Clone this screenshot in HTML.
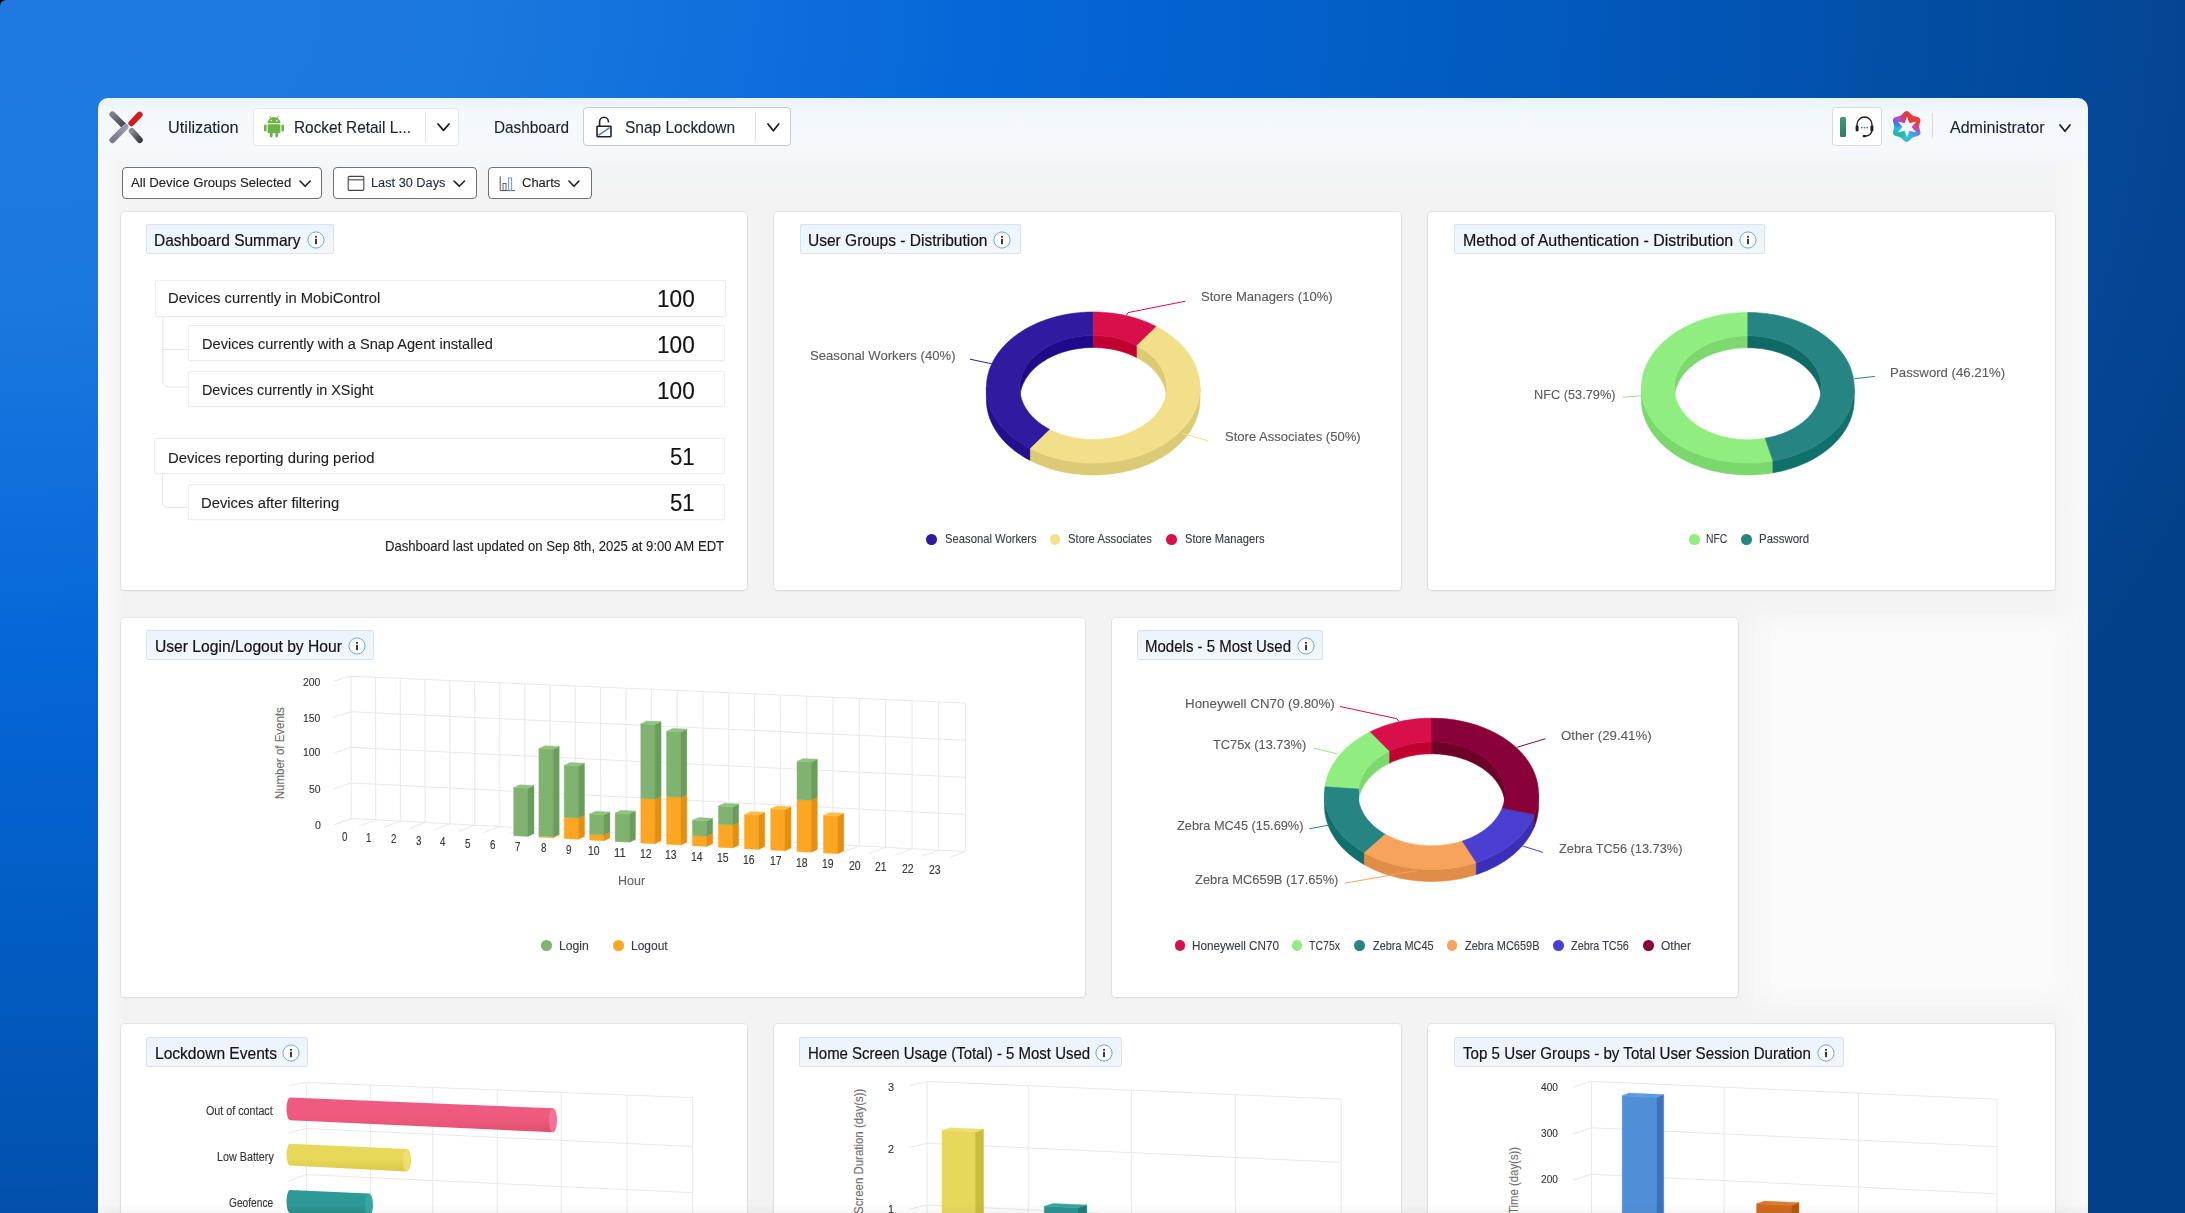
<!DOCTYPE html>
<html><head><meta charset="utf-8"><style>
html,body{margin:0;padding:0;}
body{width:2185px;height:1213px;overflow:hidden;position:relative;background:#000;font-family:"Liberation Sans",sans-serif;}
#bg{position:absolute;left:0;top:0;width:2185px;height:1213px;border-top-left-radius:6px;
background:radial-gradient(ellipse 2304px 1500px at 0 0,#2079e0 0%,#1b78df 20%,#0567d8 43%,#035cc4 62%,#0252ae 79%,#024ea4 83%,#044694 94%,#03408a 101%);}
.t{position:absolute;white-space:nowrap;-webkit-text-stroke:0.12px currentColor;}
svg{overflow:visible;}
</style></head><body><div id="bg"></div>
<div style="position:absolute;left:98px;top:98px;width:1990px;height:1200px;border-radius:10px 10px 0 0;background:linear-gradient(to bottom,#e8f3fc 0px,#f3f8fd 14px,#f5f9fd 40px,#f5f8fb 57px,#f3f4f5 74px,#f3f3f3 120px,#f3f3f3 100%);"></div>
<div style="position:absolute;left:98px;top:160px;width:24px;height:1100px;background:linear-gradient(to right,#fafafa,#f4f4f4);"></div>
<div style="position:absolute;left:2056px;top:160px;width:32px;height:1100px;background:linear-gradient(to left,#fafafa,#f4f4f4);"></div>
<div style="position:absolute;left:1740px;top:600px;width:348px;height:420px;overflow:hidden;"><div style="position:absolute;left:14px;top:14px;width:318px;height:392px;background:#fafafa;filter:blur(14px);"></div></div>
<div style="position:absolute;left:121px;top:212px;width:626px;height:378px;background:#fff;border-radius:4px;box-shadow:0 0 0 1px rgba(0,0,0,0.05), 0 1px 3px rgba(0,0,0,0.07);"></div>
<div style="position:absolute;left:774px;top:212px;width:627px;height:378px;background:#fff;border-radius:4px;box-shadow:0 0 0 1px rgba(0,0,0,0.05), 0 1px 3px rgba(0,0,0,0.07);"></div>
<div style="position:absolute;left:1428px;top:212px;width:627px;height:378px;background:#fff;border-radius:4px;box-shadow:0 0 0 1px rgba(0,0,0,0.05), 0 1px 3px rgba(0,0,0,0.07);"></div>
<div style="position:absolute;left:121px;top:618px;width:964px;height:379px;background:#fff;border-radius:4px;box-shadow:0 0 0 1px rgba(0,0,0,0.05), 0 1px 3px rgba(0,0,0,0.07);"></div>
<div style="position:absolute;left:1112px;top:618px;width:626px;height:379px;background:#fff;border-radius:4px;box-shadow:0 0 0 1px rgba(0,0,0,0.05), 0 1px 3px rgba(0,0,0,0.07);"></div>
<div style="position:absolute;left:121px;top:1024px;width:626px;height:276px;background:#fff;border-radius:4px;box-shadow:0 0 0 1px rgba(0,0,0,0.05), 0 1px 3px rgba(0,0,0,0.07);"></div>
<div style="position:absolute;left:774px;top:1024px;width:627px;height:276px;background:#fff;border-radius:4px;box-shadow:0 0 0 1px rgba(0,0,0,0.05), 0 1px 3px rgba(0,0,0,0.07);"></div>
<div style="position:absolute;left:1428px;top:1024px;width:627px;height:276px;background:#fff;border-radius:4px;box-shadow:0 0 0 1px rgba(0,0,0,0.05), 0 1px 3px rgba(0,0,0,0.07);"></div>
<div style="position:absolute;left:146px;top:224px;width:188px;height:30px;box-sizing:border-box;background:linear-gradient(#ecf3fc,#f3f7fd);border:1px solid #d9e3ee;border-radius:2px;"></div>
<div class="t" style="left:154.35px;top:231.51px;font-size:16.4px;line-height:16.4px;color:#141414;transform:scaleX(0.9459);transform-origin:0 0;-webkit-text-stroke:0.2px #141414;">Dashboard Summary</div>
<svg style="position:absolute;left:307.1px;top:230.7px" width="18" height="18" viewBox="0 0 18 18"><circle cx="9" cy="9" r="8.1" fill="#fff" stroke="#6ea6ec" stroke-width="1"/><rect x="8.15" y="7.8" width="1.7" height="5.4" fill="#1a1a1a"/><rect x="8.15" y="4.9" width="1.7" height="1.8" fill="#1a1a1a"/></svg>
<div style="position:absolute;left:799.5px;top:224px;width:221.10000000000002px;height:30px;box-sizing:border-box;background:linear-gradient(#ecf3fc,#f3f7fd);border:1px solid #d9e3ee;border-radius:2px;"></div>
<div class="t" style="left:807.85px;top:231.51px;font-size:16.4px;line-height:16.4px;color:#141414;transform:scaleX(0.9472);transform-origin:0 0;-webkit-text-stroke:0.2px #141414;">User Groups - Distribution</div>
<svg style="position:absolute;left:992.7px;top:230.7px" width="18" height="18" viewBox="0 0 18 18"><circle cx="9" cy="9" r="8.1" fill="#fff" stroke="#6ea6ec" stroke-width="1"/><rect x="8.15" y="7.8" width="1.7" height="5.4" fill="#1a1a1a"/><rect x="8.15" y="4.9" width="1.7" height="1.8" fill="#1a1a1a"/></svg>
<div style="position:absolute;left:1454.3px;top:224px;width:310.9000000000001px;height:30px;box-sizing:border-box;background:linear-gradient(#ecf3fc,#f3f7fd);border:1px solid #d9e3ee;border-radius:2px;"></div>
<div class="t" style="left:1462.62px;top:231.51px;font-size:16.4px;line-height:16.4px;color:#141414;transform:scaleX(0.9756);transform-origin:0 0;-webkit-text-stroke:0.2px #141414;">Method of Authentication - Distribution</div>
<svg style="position:absolute;left:1739.1px;top:230.7px" width="18" height="18" viewBox="0 0 18 18"><circle cx="9" cy="9" r="8.1" fill="#fff" stroke="#6ea6ec" stroke-width="1"/><rect x="8.15" y="7.8" width="1.7" height="5.4" fill="#1a1a1a"/><rect x="8.15" y="4.9" width="1.7" height="1.8" fill="#1a1a1a"/></svg>
<div style="position:absolute;left:146.2px;top:630.4px;width:227.8px;height:30px;box-sizing:border-box;background:linear-gradient(#ecf3fc,#f3f7fd);border:1px solid #d9e3ee;border-radius:2px;"></div>
<div class="t" style="left:154.55px;top:637.91px;font-size:16.4px;line-height:16.4px;color:#141414;transform:scaleX(0.9543);transform-origin:0 0;-webkit-text-stroke:0.2px #141414;">User Login/Logout by Hour</div>
<svg style="position:absolute;left:347.5px;top:637.1px" width="18" height="18" viewBox="0 0 18 18"><circle cx="9" cy="9" r="8.1" fill="#fff" stroke="#6ea6ec" stroke-width="1"/><rect x="8.15" y="7.8" width="1.7" height="5.4" fill="#1a1a1a"/><rect x="8.15" y="4.9" width="1.7" height="1.8" fill="#1a1a1a"/></svg>
<div style="position:absolute;left:1137px;top:630.4px;width:185.5999999999999px;height:30px;box-sizing:border-box;background:linear-gradient(#ecf3fc,#f3f7fd);border:1px solid #d9e3ee;border-radius:2px;"></div>
<div class="t" style="left:1145.38px;top:637.91px;font-size:16.4px;line-height:16.4px;color:#141414;transform:scaleX(0.9160);transform-origin:0 0;-webkit-text-stroke:0.2px #141414;">Models - 5 Most Used</div>
<svg style="position:absolute;left:1296.8px;top:637.1px" width="18" height="18" viewBox="0 0 18 18"><circle cx="9" cy="9" r="8.1" fill="#fff" stroke="#6ea6ec" stroke-width="1"/><rect x="8.15" y="7.8" width="1.7" height="5.4" fill="#1a1a1a"/><rect x="8.15" y="4.9" width="1.7" height="1.8" fill="#1a1a1a"/></svg>
<div style="position:absolute;left:146.2px;top:1037px;width:161.60000000000002px;height:30px;box-sizing:border-box;background:linear-gradient(#ecf3fc,#f3f7fd);border:1px solid #d9e3ee;border-radius:2px;"></div>
<div class="t" style="left:154.55px;top:1044.51px;font-size:16.4px;line-height:16.4px;color:#141414;transform:scaleX(0.9491);transform-origin:0 0;-webkit-text-stroke:0.2px #141414;">Lockdown Events</div>
<svg style="position:absolute;left:281.8px;top:1043.7px" width="18" height="18" viewBox="0 0 18 18"><circle cx="9" cy="9" r="8.1" fill="#fff" stroke="#6ea6ec" stroke-width="1"/><rect x="8.15" y="7.8" width="1.7" height="5.4" fill="#1a1a1a"/><rect x="8.15" y="4.9" width="1.7" height="1.8" fill="#1a1a1a"/></svg>
<div style="position:absolute;left:799.2px;top:1037px;width:323.29999999999995px;height:30px;box-sizing:border-box;background:linear-gradient(#ecf3fc,#f3f7fd);border:1px solid #d9e3ee;border-radius:2px;"></div>
<div class="t" style="left:807.59px;top:1044.51px;font-size:16.4px;line-height:16.4px;color:#141414;transform:scaleX(0.9136);transform-origin:0 0;-webkit-text-stroke:0.2px #141414;">Home Screen Usage (Total) - 5 Most Used</div>
<svg style="position:absolute;left:1095.1px;top:1043.7px" width="18" height="18" viewBox="0 0 18 18"><circle cx="9" cy="9" r="8.1" fill="#fff" stroke="#6ea6ec" stroke-width="1"/><rect x="8.15" y="7.8" width="1.7" height="5.4" fill="#1a1a1a"/><rect x="8.15" y="4.9" width="1.7" height="1.8" fill="#1a1a1a"/></svg>
<div style="position:absolute;left:1454px;top:1037px;width:389.70000000000005px;height:30px;box-sizing:border-box;background:linear-gradient(#ecf3fc,#f3f7fd);border:1px solid #d9e3ee;border-radius:2px;"></div>
<div class="t" style="left:1463.30px;top:1044.51px;font-size:16.4px;line-height:16.4px;color:#141414;transform:scaleX(0.9230);transform-origin:0 0;-webkit-text-stroke:0.2px #141414;">Top 5 User Groups - by Total User Session Duration</div>
<svg style="position:absolute;left:1816.8px;top:1043.7px" width="18" height="18" viewBox="0 0 18 18"><circle cx="9" cy="9" r="8.1" fill="#fff" stroke="#6ea6ec" stroke-width="1"/><rect x="8.15" y="7.8" width="1.7" height="5.4" fill="#1a1a1a"/><rect x="8.15" y="4.9" width="1.7" height="1.8" fill="#1a1a1a"/></svg>
<svg style="position:absolute;left:104px;top:108px" width="42" height="40" viewBox="104 108 42 40"><defs><linearGradient id="lg1" x1="0" y1="0" x2="1" y2="1"><stop offset="0" stop-color="#7e8189"/><stop offset="1" stop-color="#3c3f45"/></linearGradient><linearGradient id="lg2" x1="0" y1="1" x2="1" y2="0"><stop offset="0" stop-color="#7a7d88"/><stop offset="1" stop-color="#9a9daa"/></linearGradient><linearGradient id="lg3" x1="0" y1="0" x2="1" y2="1"><stop offset="0" stop-color="#8a8d95"/><stop offset="1" stop-color="#3a3d43"/></linearGradient></defs><g stroke-linecap="round" stroke-width="6" fill="none"><line x1="112.4" y1="114.4" x2="124.8" y2="126.6" stroke="url(#lg1)"/><line x1="112.4" y1="140.2" x2="125.4" y2="127" stroke="url(#lg2)"/><line x1="131.8" y1="131" x2="139.8" y2="140" stroke="url(#lg3)"/><line x1="131.4" y1="123.2" x2="139.6" y2="114.6" stroke="#d41a1f"/></g></svg>
<div class="t" style="left:167.61px;top:119.31px;font-size:16.4px;line-height:16.4px;color:#1b2230;transform:scaleX(0.9923);transform-origin:0 0;">Utilization</div>
<div style="position:absolute;left:253px;top:108px;width:206px;height:38px;box-sizing:border-box;background:#fff;border:1px solid #e4e8ec;border-radius:4px;"></div>
<div style="position:absolute;left:425px;top:112px;width:1px;height:30px;background:#e2e4e7;"></div>
<svg style="position:absolute;left:263px;top:115px" width="22" height="23" viewBox="0 0 22 23"><g fill="#6cb446"><path d="M4.6 8.2 A6.4 6.2 0 0 1 17.4 8.2 Z"/><rect x="4.6" y="9.2" width="12.8" height="9" rx="1.2"/><rect x="1" y="9.4" width="2.6" height="7.2" rx="1.3"/><rect x="18.4" y="9.4" width="2.6" height="7.2" rx="1.3"/><rect x="6.9" y="15" width="2.7" height="7.4" rx="1.3"/><rect x="12.4" y="15" width="2.7" height="7.4" rx="1.3"/><line x1="6.6" y1="1" x2="8" y2="3.4" stroke="#6cb446" stroke-width="0.9"/><line x1="15.4" y1="1" x2="14" y2="3.4" stroke="#6cb446" stroke-width="0.9"/></g><circle cx="8.2" cy="5.6" r="0.8" fill="#fff"/><circle cx="13.8" cy="5.6" r="0.8" fill="#fff"/></svg>
<div class="t" style="left:294.46px;top:119.11px;font-size:16.4px;line-height:16.4px;color:#1b2230;transform:scaleX(0.9379);transform-origin:0 0;">Rocket Retail L...</div>
<svg style="position:absolute;left:436px;top:121.5px" width="15" height="10.3"><polyline points="2,2 7.5,8.3 13,2" fill="none" stroke="#1f1f1f" stroke-width="1.8" stroke-linecap="round" stroke-linejoin="round"/></svg>
<div class="t" style="left:493.66px;top:119.11px;font-size:16.4px;line-height:16.4px;color:#1b2230;transform:scaleX(0.9359);transform-origin:0 0;">Dashboard</div>
<div style="position:absolute;left:583px;top:107px;width:208px;height:39px;box-sizing:border-box;background:#fff;border:1px solid #c9ccd1;border-radius:4px;"></div>
<div style="position:absolute;left:755px;top:112px;width:1px;height:30px;background:#dfe1e4;"></div>
<svg style="position:absolute;left:594px;top:114px" width="20" height="25" viewBox="0 0 20 25"><path d="M5.6 12 V7.6 A4.4 4.4 0 0 1 14.4 7.6 V8.6" fill="none" stroke="#222" stroke-width="1.6"/><rect x="3" y="12.3" width="14" height="10.4" fill="none" stroke="#222" stroke-width="1.6" rx="0.6"/><line x1="4.4" y1="21.4" x2="15.6" y2="13.6" stroke="#3d84d8" stroke-width="1.4"/></svg>
<div class="t" style="left:625.00px;top:119.11px;font-size:16.4px;line-height:16.4px;color:#1b2230;transform:scaleX(0.9440);transform-origin:0 0;">Snap Lockdown</div>
<svg style="position:absolute;left:766px;top:121.5px" width="14.7" height="10.7"><polyline points="2,2 7.35,8.7 12.7,2" fill="none" stroke="#1f1f1f" stroke-width="1.8" stroke-linecap="round" stroke-linejoin="round"/></svg>
<div style="position:absolute;left:1832px;top:107px;width:50px;height:39px;box-sizing:border-box;background:#fff;border:1px solid #d9d9dc;border-radius:3.5px;"></div>
<div style="position:absolute;left:1840.4px;top:116.7px;width:6px;height:20px;border-radius:1.5px;background:linear-gradient(#3c9a76,#2f7a62);"></div>
<svg style="position:absolute;left:1854px;top:115px" width="21" height="23" viewBox="0 0 21 23"><path d="M3 12 V9.5 A7.5 7.5 0 0 1 18 9.5 V12" fill="none" stroke="#1d1d1d" stroke-width="1.35"/><rect x="1.6" y="10.4" width="3" height="6" rx="1.4" fill="#1d1d1d"/><rect x="16.4" y="10.4" width="3" height="6" rx="1.4" fill="#1d1d1d"/><path d="M17.8 16 Q17.2 20.6 11 21.2" fill="none" stroke="#1d1d1d" stroke-width="1.5"/><rect x="8.6" y="20" width="3.4" height="2.2" rx="1" fill="#1d1d1d"/><circle cx="7.8" cy="12.6" r="0.9" fill="#4a72c8"/><circle cx="10.5" cy="12.6" r="0.9" fill="#4a72c8"/><circle cx="13.2" cy="12.6" r="0.9" fill="#4a72c8"/></svg>
<div style="position:absolute;left:1889.7px;top:109.5px;width:34px;height:34px;background:conic-gradient(from 0deg at 50% 50%,#e23b3b 0deg,#ec3f30 60deg,#c04cb0 100deg,#5a8ef0 128deg,#2cc4d8 180deg,#1fb894 230deg,#2ab8e8 262deg,#4a6ee0 290deg,#b84ad8 312deg,#d83a60 338deg,#e23b3b 360deg);clip-path:path('M13.70 3.45 Q17.00 -0.40 20.30 3.45 L21.20 4.51 Q23.00 6.61 25.72 7.12 L27.08 7.37 Q32.07 8.30 30.38 13.09 L29.92 14.39 Q29.00 17.00 29.92 19.61 L30.38 20.91 Q32.07 25.70 27.08 26.63 L25.72 26.88 Q23.00 27.39 21.20 29.49 L20.30 30.55 Q17.00 34.40 13.70 30.55 L12.80 29.49 Q11.00 27.39 8.28 26.88 L6.92 26.63 Q1.93 25.70 3.62 20.92 L4.08 19.61 Q5.00 17.00 4.08 14.39 L3.62 13.09 Q1.93 8.30 6.92 7.37 L8.28 7.12 Q11.00 6.61 12.80 4.51 Z');"></div>
<svg style="position:absolute;left:1889.7px;top:109.5px" width="34" height="34"><path d="M16.72 7.19 Q17.00 6.40 17.28 7.19 L19.07 12.35 Q19.30 13.02 19.99 12.88 L25.35 11.86 Q26.18 11.70 25.63 12.34 L22.06 16.47 Q21.60 17.00 22.06 17.53 L25.63 21.66 Q26.18 22.30 25.35 22.14 L19.99 21.12 Q19.30 20.98 19.07 21.65 L17.28 26.81 Q17.00 27.60 16.72 26.81 L14.93 21.65 Q14.70 20.98 14.01 21.12 L8.65 22.14 Q7.82 22.30 8.37 21.66 L11.94 17.53 Q12.40 17.00 11.94 16.47 L8.37 12.34 Q7.82 11.70 8.65 11.86 L14.01 12.88 Q14.70 13.02 14.93 12.35 Z" fill="#f5f8fd"/></svg>
<div style="position:absolute;left:1932px;top:113px;width:1px;height:25px;background:#d8dadd;"></div>
<div class="t" style="left:1950.40px;top:119.21px;font-size:16.4px;line-height:16.4px;color:#1b2230;transform:scaleX(0.9784);transform-origin:0 0;">Administrator</div>
<svg style="position:absolute;left:2058px;top:123px" width="14" height="10.3"><polyline points="2,2 7,8.3 12,2" fill="none" stroke="#1f1f1f" stroke-width="1.8" stroke-linecap="round" stroke-linejoin="round"/></svg>
<div style="position:absolute;left:122px;top:167px;width:200px;height:32px;box-sizing:border-box;background:#fff;border:1px solid #707070;border-radius:4px;"></div>
<div style="position:absolute;left:332.5px;top:167px;width:144.5px;height:32px;box-sizing:border-box;background:#fff;border:1px solid #707070;border-radius:4px;"></div>
<div style="position:absolute;left:488px;top:167px;width:104px;height:32px;box-sizing:border-box;background:#fff;border:1px solid #707070;border-radius:4px;"></div>
<div class="t" style="left:130.60px;top:176.40px;font-size:13.7px;line-height:13.7px;color:#222;transform:scaleX(0.9615);transform-origin:0 0;">All Device Groups Selected</div>
<svg style="position:absolute;left:297.5px;top:179.3px" width="14.2" height="9.3"><polyline points="2,2 7.1,7.3 12.2,2" fill="none" stroke="#1f1f1f" stroke-width="1.6" stroke-linecap="round" stroke-linejoin="round"/></svg>
<svg style="position:absolute;left:347px;top:175px" width="18" height="17"><rect x="1.2" y="1.4" width="15.6" height="14" rx="1.2" fill="none" stroke="#444" stroke-width="1.1"/><line x1="1.2" y1="4.8" x2="16.8" y2="4.8" stroke="#444" stroke-width="1.1"/></svg>
<div class="t" style="left:370.67px;top:176.40px;font-size:13.7px;line-height:13.7px;color:#1c2a45;transform:scaleX(0.9311);transform-origin:0 0;">Last 30 Days</div>
<svg style="position:absolute;left:451.5px;top:179.3px" width="14.5" height="9.3"><polyline points="2,2 7.25,7.3 12.5,2" fill="none" stroke="#1f1f1f" stroke-width="1.6" stroke-linecap="round" stroke-linejoin="round"/></svg>
<svg style="position:absolute;left:499px;top:175px" width="17" height="17"><path d="M1.2 1.2 V15.6 H16" fill="none" stroke="#555" stroke-width="1"/><rect x="4" y="8.5" width="3" height="6.8" fill="none" stroke="#555" stroke-width="0.9"/><rect x="9.6" y="3" width="3" height="12.3" fill="none" stroke="#5b9be8" stroke-width="1"/></svg>
<div class="t" style="left:522.00px;top:176.40px;font-size:13.7px;line-height:13.7px;color:#222;transform:scaleX(0.9488);transform-origin:0 0;">Charts</div>
<svg style="position:absolute;left:566.7px;top:179.3px" width="13.9" height="9.3"><polyline points="2,2 6.95,7.3 11.9,2" fill="none" stroke="#1f1f1f" stroke-width="1.6" stroke-linecap="round" stroke-linejoin="round"/></svg>
<div style="position:absolute;left:154.5px;top:279.5px;width:571.0px;height:37.0px;box-sizing:border-box;background:#fff;border:1px solid #eaecee;border-radius:2px;box-shadow:0 1px 1px rgba(0,0,0,0.025);"></div>
<div style="position:absolute;left:187.6px;top:325.3px;width:537.9px;height:36.0px;box-sizing:border-box;background:#fff;border:1px solid #eaecee;border-radius:2px;box-shadow:0 1px 1px rgba(0,0,0,0.025);"></div>
<div style="position:absolute;left:187.6px;top:371.2px;width:537.9px;height:36.19999999999999px;box-sizing:border-box;background:#fff;border:1px solid #eaecee;border-radius:2px;box-shadow:0 1px 1px rgba(0,0,0,0.025);"></div>
<div style="position:absolute;left:154.1px;top:438.2px;width:571.1px;height:35.80000000000001px;box-sizing:border-box;background:#fff;border:1px solid #eaecee;border-radius:2px;box-shadow:0 1px 1px rgba(0,0,0,0.025);"></div>
<div style="position:absolute;left:187.9px;top:483.5px;width:537.3000000000001px;height:36.5px;box-sizing:border-box;background:#fff;border:1px solid #eaecee;border-radius:2px;box-shadow:0 1px 1px rgba(0,0,0,0.025);"></div>
<svg style="position:absolute;left:0;top:0" width="800" height="600"><path d="M162.8 316.5 V381 Q162.8 387 168.8 387 H187.6" fill="none" stroke="#e3e6e9" stroke-width="1"/><path d="M163 349.5 H187.6" fill="none" stroke="#e3e6e9" stroke-width="1"/><path d="M162.4 474 V501.5 Q162.4 507.4 168.4 507.4 H187.9" fill="none" stroke="#e3e6e9" stroke-width="1"/></svg>
<div class="t" style="left:167.93px;top:290.43px;font-size:15.2px;line-height:15.2px;color:#1f1f1f;transform:scaleX(0.9713);transform-origin:0 0;">Devices currently in MobiControl</div>
<div class="t" style="left:201.54px;top:336.13px;font-size:15.2px;line-height:15.2px;color:#1f1f1f;transform:scaleX(0.9598);transform-origin:0 0;">Devices currently with a Snap Agent installed</div>
<div class="t" style="left:201.55px;top:381.73px;font-size:15.2px;line-height:15.2px;color:#1f1f1f;transform:scaleX(0.9456);transform-origin:0 0;">Devices currently in XSight</div>
<div class="t" style="left:167.72px;top:449.53px;font-size:15.2px;line-height:15.2px;color:#1f1f1f;transform:scaleX(0.9780);transform-origin:0 0;">Devices reporting during period</div>
<div class="t" style="left:201.23px;top:495.43px;font-size:15.2px;line-height:15.2px;color:#1f1f1f;transform:scaleX(0.9739);transform-origin:0 0;">Devices after filtering</div>
<div class="t" style="left:657.16px;top:286.78px;font-size:24px;line-height:24px;color:#111;transform:scaleX(0.9433);transform-origin:0 0;">100</div>
<div class="t" style="left:657.16px;top:332.58px;font-size:24px;line-height:24px;color:#111;transform:scaleX(0.9433);transform-origin:0 0;">100</div>
<div class="t" style="left:657.16px;top:378.68px;font-size:24px;line-height:24px;color:#111;transform:scaleX(0.9433);transform-origin:0 0;">100</div>
<div class="t" style="left:669.80px;top:444.78px;font-size:24px;line-height:24px;color:#111;transform:scaleX(0.9261);transform-origin:0 0;">51</div>
<div class="t" style="left:669.80px;top:490.68px;font-size:24px;line-height:24px;color:#111;transform:scaleX(0.9261);transform-origin:0 0;">51</div>
<div class="t" style="left:385.30px;top:539.04px;font-size:14.6px;line-height:14.6px;color:#1f1f1f;transform:scaleX(0.8989);transform-origin:0 0;">Dashboard last updated on Sep 8th, 2025 at 9:00 AM EDT</div>
<svg style="position:absolute;left:0;top:0" width="2185" height="1213"><polygon points="1019.70,387.50 1019.73,386.14 1019.80,384.78 1019.93,383.42 1020.10,382.07 1020.33,380.72 1020.60,379.37 1020.93,378.03 1021.31,376.70 1021.73,375.37 1022.20,374.05 1022.73,372.74 1023.30,371.44 1023.92,370.15 1024.58,368.88 1025.29,367.61 1026.05,366.36 1026.86,365.13 1027.71,363.91 1028.61,362.70 1029.55,361.52 1030.53,360.35 1031.56,359.20 1032.63,358.07 1033.74,356.96 1034.89,355.87 1036.08,354.80 1037.31,353.75 1038.58,352.73 1039.88,351.73 1041.23,350.76 1042.61,349.81 1044.02,348.88 1045.47,347.99 1046.94,347.12 1048.46,346.27 1050.00,345.46 1051.57,344.67 1053.17,343.92 1054.80,343.19 1056.45,342.50 1058.13,341.83 1059.83,341.20 1061.56,340.60 1063.30,340.03 1065.07,339.49 1066.86,338.99 1068.67,338.52 1070.49,338.08 1072.32,337.68 1074.18,337.31 1076.04,336.97 1077.92,336.67 1079.81,336.41 1081.70,336.18 1083.61,335.98 1085.52,335.82 1087.43,335.70 1089.35,335.61 1091.28,335.55 1093.20,335.54 1093.20,347.54 1091.28,347.55 1089.35,347.61 1087.43,347.70 1085.52,347.82 1083.61,347.98 1081.70,348.18 1079.81,348.41 1077.92,348.67 1076.04,348.97 1074.18,349.31 1072.32,349.68 1070.49,350.08 1068.67,350.52 1066.86,350.99 1065.07,351.49 1063.30,352.03 1061.56,352.60 1059.83,353.20 1058.13,353.83 1056.45,354.50 1054.80,355.19 1053.17,355.92 1051.57,356.67 1050.00,357.46 1048.46,358.27 1046.94,359.12 1045.47,359.99 1044.02,360.88 1042.61,361.81 1041.23,362.76 1039.88,363.73 1038.58,364.73 1037.31,365.75 1036.08,366.80 1034.89,367.87 1033.74,368.96 1032.63,370.07 1031.56,371.20 1030.53,372.35 1029.55,373.52 1028.61,374.70 1027.71,375.91 1026.86,377.13 1026.05,378.36 1025.29,379.61 1024.58,380.88 1023.92,382.15 1023.30,383.44 1022.73,384.74 1022.20,386.05 1021.73,387.37 1021.31,388.70 1020.93,390.03 1020.60,391.37 1020.33,392.72 1020.10,394.07 1019.93,395.42 1019.80,396.78 1019.73,398.14 1019.70,399.50" fill="#1f0a8a" stroke="#1f0a8a" stroke-width="0.6"/><polygon points="1136.40,345.46 1137.94,346.27 1139.46,347.12 1140.93,347.99 1142.38,348.88 1143.79,349.81 1145.17,350.76 1146.52,351.73 1147.82,352.73 1149.09,353.75 1150.32,354.80 1151.51,355.87 1152.66,356.96 1153.77,358.07 1154.84,359.20 1155.87,360.35 1156.85,361.52 1157.79,362.70 1158.69,363.91 1159.54,365.13 1160.35,366.36 1161.11,367.61 1161.82,368.88 1162.48,370.15 1163.10,371.44 1163.67,372.74 1164.20,374.05 1164.67,375.37 1165.09,376.70 1165.47,378.03 1165.80,379.37 1166.07,380.72 1166.30,382.07 1166.47,383.42 1166.60,384.78 1166.67,386.14 1166.70,387.50 1166.70,399.50 1166.67,398.14 1166.60,396.78 1166.47,395.42 1166.30,394.07 1166.07,392.72 1165.80,391.37 1165.47,390.03 1165.09,388.70 1164.67,387.37 1164.20,386.05 1163.67,384.74 1163.10,383.44 1162.48,382.15 1161.82,380.88 1161.11,379.61 1160.35,378.36 1159.54,377.13 1158.69,375.91 1157.79,374.70 1156.85,373.52 1155.87,372.35 1154.84,371.20 1153.77,370.07 1152.66,368.96 1151.51,367.87 1150.32,366.80 1149.09,365.75 1147.82,364.73 1146.52,363.73 1145.17,362.76 1143.79,361.81 1142.38,360.88 1140.93,359.99 1139.46,359.12 1137.94,358.27 1136.40,357.46" fill="#dccb73" stroke="#dccb73" stroke-width="0.6"/><polygon points="1093.20,335.54 1095.12,335.55 1097.05,335.61 1098.97,335.70 1100.88,335.82 1102.79,335.98 1104.70,336.18 1106.59,336.41 1108.48,336.67 1110.36,336.97 1112.22,337.31 1114.08,337.68 1115.91,338.08 1117.73,338.52 1119.54,338.99 1121.33,339.49 1123.10,340.03 1124.84,340.60 1126.57,341.20 1128.27,341.83 1129.95,342.50 1131.60,343.19 1133.23,343.92 1134.83,344.67 1136.40,345.46 1136.40,357.46 1134.83,356.67 1133.23,355.92 1131.60,355.19 1129.95,354.50 1128.27,353.83 1126.57,353.20 1124.84,352.60 1123.10,352.03 1121.33,351.49 1119.54,350.99 1117.73,350.52 1115.91,350.08 1114.08,349.68 1112.22,349.31 1110.36,348.97 1108.48,348.67 1106.59,348.41 1104.70,348.18 1102.79,347.98 1100.88,347.82 1098.97,347.70 1097.05,347.61 1095.12,347.55 1093.20,347.54" fill="#c0002f" stroke="#c0002f" stroke-width="0.6"/><polygon points="1030.42,448.59 1028.18,447.40 1025.99,446.18 1023.84,444.92 1021.74,443.61 1019.68,442.27 1017.68,440.89 1015.73,439.48 1013.83,438.02 1011.99,436.54 1010.20,435.02 1008.47,433.47 1006.80,431.88 1005.18,430.27 1003.63,428.62 1002.14,426.95 1000.71,425.25 999.34,423.53 998.04,421.78 996.80,420.01 995.63,418.21 994.53,416.40 993.49,414.56 992.53,412.70 991.63,410.83 990.80,408.95 990.04,407.04 989.35,405.13 988.73,403.20 988.19,401.26 987.71,399.31 987.31,397.36 986.99,395.39 986.73,393.42 986.55,391.45 986.44,389.48 986.40,387.50 986.40,399.50 986.44,401.48 986.55,403.45 986.73,405.42 986.99,407.39 987.31,409.36 987.71,411.31 988.19,413.26 988.73,415.20 989.35,417.13 990.04,419.04 990.80,420.95 991.63,422.83 992.53,424.70 993.49,426.56 994.53,428.40 995.63,430.21 996.80,432.01 998.04,433.78 999.34,435.53 1000.71,437.25 1002.14,438.95 1003.63,440.62 1005.18,442.27 1006.80,443.88 1008.47,445.47 1010.20,447.02 1011.99,448.54 1013.83,450.02 1015.73,451.48 1017.68,452.89 1019.68,454.27 1021.74,455.61 1023.84,456.92 1025.99,458.18 1028.18,459.40 1030.42,460.59" fill="#24108f" stroke="#24108f" stroke-width="0.6"/><polygon points="1200.00,387.50 1199.96,389.48 1199.85,391.45 1199.67,393.42 1199.41,395.39 1199.09,397.36 1198.69,399.31 1198.21,401.26 1197.67,403.20 1197.05,405.13 1196.36,407.04 1195.60,408.95 1194.77,410.83 1193.87,412.70 1192.91,414.56 1191.87,416.40 1190.77,418.21 1189.60,420.01 1188.36,421.78 1187.06,423.53 1185.69,425.25 1184.26,426.95 1182.77,428.62 1181.22,430.27 1179.60,431.88 1177.93,433.47 1176.20,435.02 1174.41,436.54 1172.57,438.02 1170.67,439.48 1168.72,440.89 1166.72,442.27 1164.66,443.61 1162.56,444.92 1160.41,446.18 1158.22,447.40 1155.98,448.59 1153.69,449.73 1151.37,450.83 1149.00,451.88 1146.60,452.89 1144.16,453.86 1141.69,454.78 1139.18,455.65 1136.64,456.48 1134.07,457.26 1131.47,457.99 1128.85,458.68 1126.20,459.31 1123.53,459.90 1120.84,460.43 1118.13,460.92 1115.40,461.36 1112.66,461.74 1109.91,462.08 1107.14,462.36 1104.36,462.59 1101.58,462.77 1098.79,462.90 1096.00,462.98 1093.20,463.01 1090.40,462.98 1087.61,462.90 1084.82,462.77 1082.04,462.59 1079.26,462.36 1076.49,462.08 1073.74,461.74 1071.00,461.36 1068.27,460.92 1065.56,460.43 1062.87,459.90 1060.20,459.31 1057.55,458.68 1054.93,457.99 1052.33,457.26 1049.76,456.48 1047.22,455.65 1044.71,454.78 1042.24,453.86 1039.80,452.89 1037.40,451.88 1035.03,450.83 1032.71,449.73 1030.42,448.59 1030.42,460.59 1032.71,461.73 1035.03,462.83 1037.40,463.88 1039.80,464.89 1042.24,465.86 1044.71,466.78 1047.22,467.65 1049.76,468.48 1052.33,469.26 1054.93,469.99 1057.55,470.68 1060.20,471.31 1062.87,471.90 1065.56,472.43 1068.27,472.92 1071.00,473.36 1073.74,473.74 1076.49,474.08 1079.26,474.36 1082.04,474.59 1084.82,474.77 1087.61,474.90 1090.40,474.98 1093.20,475.01 1096.00,474.98 1098.79,474.90 1101.58,474.77 1104.36,474.59 1107.14,474.36 1109.91,474.08 1112.66,473.74 1115.40,473.36 1118.13,472.92 1120.84,472.43 1123.53,471.90 1126.20,471.31 1128.85,470.68 1131.47,469.99 1134.07,469.26 1136.64,468.48 1139.18,467.65 1141.69,466.78 1144.16,465.86 1146.60,464.89 1149.00,463.88 1151.37,462.83 1153.69,461.73 1155.98,460.59 1158.22,459.40 1160.41,458.18 1162.56,456.92 1164.66,455.61 1166.72,454.27 1168.72,452.89 1170.67,451.48 1172.57,450.02 1174.41,448.54 1176.20,447.02 1177.93,445.47 1179.60,443.88 1181.22,442.27 1182.77,440.62 1184.26,438.95 1185.69,437.25 1187.06,435.53 1188.36,433.78 1189.60,432.01 1190.77,430.21 1191.87,428.40 1192.91,426.56 1193.87,424.70 1194.77,422.83 1195.60,420.95 1196.36,419.04 1197.05,417.13 1197.67,415.20 1198.21,413.26 1198.69,411.31 1199.09,409.36 1199.41,407.39 1199.67,405.42 1199.85,403.45 1199.96,401.48 1200.00,399.50" fill="#dccb76" stroke="#dccb76" stroke-width="0.6"/><polygon points="1030.42,448.59 1028.18,447.40 1025.99,446.18 1023.84,444.92 1021.74,443.61 1019.68,442.27 1017.68,440.89 1015.73,439.48 1013.83,438.02 1011.99,436.54 1010.20,435.02 1008.47,433.47 1006.80,431.88 1005.18,430.27 1003.63,428.62 1002.14,426.95 1000.71,425.25 999.34,423.53 998.04,421.78 996.80,420.01 995.63,418.21 994.53,416.40 993.49,414.56 992.53,412.70 991.63,410.83 990.80,408.95 990.04,407.04 989.35,405.13 988.73,403.20 988.19,401.26 987.71,399.31 987.31,397.36 986.99,395.39 986.73,393.42 986.55,391.45 986.44,389.48 986.40,387.50 986.44,385.52 986.55,383.55 986.73,381.58 986.99,379.61 987.31,377.64 987.71,375.69 988.19,373.74 988.73,371.80 989.35,369.87 990.04,367.96 990.80,366.05 991.63,364.17 992.53,362.30 993.49,360.44 994.53,358.60 995.63,356.79 996.80,354.99 998.04,353.22 999.34,351.47 1000.71,349.75 1002.14,348.05 1003.63,346.38 1005.18,344.73 1006.80,343.12 1008.47,341.53 1010.20,339.98 1011.99,338.46 1013.83,336.98 1015.73,335.52 1017.68,334.11 1019.68,332.73 1021.74,331.39 1023.84,330.08 1025.99,328.82 1028.18,327.60 1030.42,326.41 1032.71,325.27 1035.03,324.17 1037.40,323.12 1039.80,322.11 1042.24,321.14 1044.71,320.22 1047.22,319.35 1049.76,318.52 1052.33,317.74 1054.93,317.01 1057.55,316.32 1060.20,315.69 1062.87,315.10 1065.56,314.57 1068.27,314.08 1071.00,313.64 1073.74,313.26 1076.49,312.92 1079.26,312.64 1082.04,312.41 1084.82,312.23 1087.61,312.10 1090.40,312.02 1093.20,311.99 1093.20,335.54 1091.28,335.55 1089.35,335.61 1087.43,335.70 1085.52,335.82 1083.61,335.98 1081.70,336.18 1079.81,336.41 1077.92,336.67 1076.04,336.97 1074.18,337.31 1072.32,337.68 1070.49,338.08 1068.67,338.52 1066.86,338.99 1065.07,339.49 1063.30,340.03 1061.56,340.60 1059.83,341.20 1058.13,341.83 1056.45,342.50 1054.80,343.19 1053.17,343.92 1051.57,344.67 1050.00,345.46 1048.46,346.27 1046.94,347.12 1045.47,347.99 1044.02,348.88 1042.61,349.81 1041.23,350.76 1039.88,351.73 1038.58,352.73 1037.31,353.75 1036.08,354.80 1034.89,355.87 1033.74,356.96 1032.63,358.07 1031.56,359.20 1030.53,360.35 1029.55,361.52 1028.61,362.70 1027.71,363.91 1026.86,365.13 1026.05,366.36 1025.29,367.61 1024.58,368.88 1023.92,370.15 1023.30,371.44 1022.73,372.74 1022.20,374.05 1021.73,375.37 1021.31,376.70 1020.93,378.03 1020.60,379.37 1020.33,380.72 1020.10,382.07 1019.93,383.42 1019.80,384.78 1019.73,386.14 1019.70,387.50 1019.73,388.86 1019.80,390.22 1019.93,391.58 1020.10,392.93 1020.33,394.28 1020.60,395.63 1020.93,396.97 1021.31,398.30 1021.73,399.63 1022.20,400.95 1022.73,402.26 1023.30,403.56 1023.92,404.85 1024.58,406.12 1025.29,407.39 1026.05,408.64 1026.86,409.87 1027.71,411.09 1028.61,412.30 1029.55,413.48 1030.53,414.65 1031.56,415.80 1032.63,416.93 1033.74,418.04 1034.89,419.13 1036.08,420.20 1037.31,421.25 1038.58,422.27 1039.88,423.27 1041.23,424.24 1042.61,425.19 1044.02,426.12 1045.47,427.01 1046.94,427.88 1048.46,428.73 1050.00,429.54" fill="#301aa0" stroke="#301aa0" stroke-width="0.6"/><polygon points="1155.98,326.41 1158.22,327.60 1160.41,328.82 1162.56,330.08 1164.66,331.39 1166.72,332.73 1168.72,334.11 1170.67,335.52 1172.57,336.98 1174.41,338.46 1176.20,339.98 1177.93,341.53 1179.60,343.12 1181.22,344.73 1182.77,346.38 1184.26,348.05 1185.69,349.75 1187.06,351.47 1188.36,353.22 1189.60,354.99 1190.77,356.79 1191.87,358.60 1192.91,360.44 1193.87,362.30 1194.77,364.17 1195.60,366.05 1196.36,367.96 1197.05,369.87 1197.67,371.80 1198.21,373.74 1198.69,375.69 1199.09,377.64 1199.41,379.61 1199.67,381.58 1199.85,383.55 1199.96,385.52 1200.00,387.50 1199.96,389.48 1199.85,391.45 1199.67,393.42 1199.41,395.39 1199.09,397.36 1198.69,399.31 1198.21,401.26 1197.67,403.20 1197.05,405.13 1196.36,407.04 1195.60,408.95 1194.77,410.83 1193.87,412.70 1192.91,414.56 1191.87,416.40 1190.77,418.21 1189.60,420.01 1188.36,421.78 1187.06,423.53 1185.69,425.25 1184.26,426.95 1182.77,428.62 1181.22,430.27 1179.60,431.88 1177.93,433.47 1176.20,435.02 1174.41,436.54 1172.57,438.02 1170.67,439.48 1168.72,440.89 1166.72,442.27 1164.66,443.61 1162.56,444.92 1160.41,446.18 1158.22,447.40 1155.98,448.59 1153.69,449.73 1151.37,450.83 1149.00,451.88 1146.60,452.89 1144.16,453.86 1141.69,454.78 1139.18,455.65 1136.64,456.48 1134.07,457.26 1131.47,457.99 1128.85,458.68 1126.20,459.31 1123.53,459.90 1120.84,460.43 1118.13,460.92 1115.40,461.36 1112.66,461.74 1109.91,462.08 1107.14,462.36 1104.36,462.59 1101.58,462.77 1098.79,462.90 1096.00,462.98 1093.20,463.01 1090.40,462.98 1087.61,462.90 1084.82,462.77 1082.04,462.59 1079.26,462.36 1076.49,462.08 1073.74,461.74 1071.00,461.36 1068.27,460.92 1065.56,460.43 1062.87,459.90 1060.20,459.31 1057.55,458.68 1054.93,457.99 1052.33,457.26 1049.76,456.48 1047.22,455.65 1044.71,454.78 1042.24,453.86 1039.80,452.89 1037.40,451.88 1035.03,450.83 1032.71,449.73 1030.42,448.59 1050.00,429.54 1051.57,430.33 1053.17,431.08 1054.80,431.81 1056.45,432.50 1058.13,433.17 1059.83,433.80 1061.56,434.40 1063.30,434.97 1065.07,435.51 1066.86,436.01 1068.67,436.48 1070.49,436.92 1072.32,437.32 1074.18,437.69 1076.04,438.03 1077.92,438.33 1079.81,438.59 1081.70,438.82 1083.61,439.02 1085.52,439.18 1087.43,439.30 1089.35,439.39 1091.28,439.45 1093.20,439.46 1095.12,439.45 1097.05,439.39 1098.97,439.30 1100.88,439.18 1102.79,439.02 1104.70,438.82 1106.59,438.59 1108.48,438.33 1110.36,438.03 1112.22,437.69 1114.08,437.32 1115.91,436.92 1117.73,436.48 1119.54,436.01 1121.33,435.51 1123.10,434.97 1124.84,434.40 1126.57,433.80 1128.27,433.17 1129.95,432.50 1131.60,431.81 1133.23,431.08 1134.83,430.33 1136.40,429.54 1137.94,428.73 1139.46,427.88 1140.93,427.01 1142.38,426.12 1143.79,425.19 1145.17,424.24 1146.52,423.27 1147.82,422.27 1149.09,421.25 1150.32,420.20 1151.51,419.13 1152.66,418.04 1153.77,416.93 1154.84,415.80 1155.87,414.65 1156.85,413.48 1157.79,412.30 1158.69,411.09 1159.54,409.87 1160.35,408.64 1161.11,407.39 1161.82,406.12 1162.48,404.85 1163.10,403.56 1163.67,402.26 1164.20,400.95 1164.67,399.63 1165.09,398.30 1165.47,396.97 1165.80,395.63 1166.07,394.28 1166.30,392.93 1166.47,391.58 1166.60,390.22 1166.67,388.86 1166.70,387.50 1166.67,386.14 1166.60,384.78 1166.47,383.42 1166.30,382.07 1166.07,380.72 1165.80,379.37 1165.47,378.03 1165.09,376.70 1164.67,375.37 1164.20,374.05 1163.67,372.74 1163.10,371.44 1162.48,370.15 1161.82,368.88 1161.11,367.61 1160.35,366.36 1159.54,365.13 1158.69,363.91 1157.79,362.70 1156.85,361.52 1155.87,360.35 1154.84,359.20 1153.77,358.07 1152.66,356.96 1151.51,355.87 1150.32,354.80 1149.09,353.75 1147.82,352.73 1146.52,351.73 1145.17,350.76 1143.79,349.81 1142.38,348.88 1140.93,347.99 1139.46,347.12 1137.94,346.27 1136.40,345.46" fill="#f2df8a" stroke="#f2df8a" stroke-width="0.6"/><polygon points="1093.20,311.99 1096.00,312.02 1098.79,312.10 1101.58,312.23 1104.36,312.41 1107.14,312.64 1109.91,312.92 1112.66,313.26 1115.40,313.64 1118.13,314.08 1120.84,314.57 1123.53,315.10 1126.20,315.69 1128.85,316.32 1131.47,317.01 1134.07,317.74 1136.64,318.52 1139.18,319.35 1141.69,320.22 1144.16,321.14 1146.60,322.11 1149.00,323.12 1151.37,324.17 1153.69,325.27 1155.98,326.41 1136.40,345.46 1134.83,344.67 1133.23,343.92 1131.60,343.19 1129.95,342.50 1128.27,341.83 1126.57,341.20 1124.84,340.60 1123.10,340.03 1121.33,339.49 1119.54,338.99 1117.73,338.52 1115.91,338.08 1114.08,337.68 1112.22,337.31 1110.36,336.97 1108.48,336.67 1106.59,336.41 1104.70,336.18 1102.79,335.98 1100.88,335.82 1098.97,335.70 1097.05,335.61 1095.12,335.55 1093.20,335.54" fill="#d90f4b" stroke="#d90f4b" stroke-width="0.6"/></svg>
<div class="t" style="left:1200.90px;top:290.48px;font-size:13.6px;line-height:13.6px;color:#5b5b5b;transform:scaleX(0.9631);transform-origin:0 0;">Store Managers (10%)</div>
<div class="t" style="left:810.00px;top:348.58px;font-size:13.6px;line-height:13.6px;color:#5b5b5b;transform:scaleX(0.9646);transform-origin:0 0;">Seasonal Workers (40%)</div>
<div class="t" style="left:1225.00px;top:429.88px;font-size:13.6px;line-height:13.6px;color:#5b5b5b;transform:scaleX(0.9596);transform-origin:0 0;">Store Associates (50%)</div>
<svg style="position:absolute;left:0;top:0" width="2185" height="1213"><polyline points="1185.40,301.20 1128.00,312.60 1126.30,315.60" fill="none" stroke="#d90f4b" stroke-width="1"/></svg>
<svg style="position:absolute;left:0;top:0" width="2185" height="1213"><polyline points="970.00,359.20 991.80,363.80" fill="none" stroke="#301aa0" stroke-width="1"/></svg>
<svg style="position:absolute;left:0;top:0" width="2185" height="1213"><polyline points="1207.80,440.70 1182.00,433.40" fill="none" stroke="#f2df8a" stroke-width="1"/></svg>
<div style="position:absolute;left:926.20px;top:534.20px;width:10.6px;height:10.6px;border-radius:50%;background:#301aa0;"></div>
<div class="t" style="left:944.70px;top:533.30px;font-size:12.4px;line-height:12.4px;color:#3a3d46;transform:scaleX(0.9076);transform-origin:0 0;">Seasonal Workers</div>
<div style="position:absolute;left:1049.70px;top:534.20px;width:10.6px;height:10.6px;border-radius:50%;background:#f2e08a;"></div>
<div class="t" style="left:1068.30px;top:533.30px;font-size:12.4px;line-height:12.4px;color:#3a3d46;transform:scaleX(0.9076);transform-origin:0 0;">Store Associates</div>
<div style="position:absolute;left:1166.00px;top:534.20px;width:10.6px;height:10.6px;border-radius:50%;background:#d90f4b;"></div>
<div class="t" style="left:1184.70px;top:533.30px;font-size:12.4px;line-height:12.4px;color:#3a3d46;transform:scaleX(0.9015);transform-origin:0 0;">Store Managers</div>
<svg style="position:absolute;left:0;top:0" width="2185" height="1213"><polygon points="1674.30,387.70 1674.33,386.34 1674.40,384.98 1674.53,383.62 1674.70,382.27 1674.93,380.92 1675.20,379.57 1675.53,378.23 1675.91,376.90 1676.33,375.57 1676.80,374.25 1677.33,372.94 1677.90,371.64 1678.52,370.35 1679.18,369.08 1679.89,367.81 1680.65,366.56 1681.46,365.33 1682.31,364.11 1683.21,362.90 1684.15,361.72 1685.13,360.55 1686.16,359.40 1687.23,358.27 1688.34,357.16 1689.49,356.07 1690.68,355.00 1691.91,353.95 1693.18,352.93 1694.48,351.93 1695.83,350.96 1697.21,350.01 1698.62,349.08 1700.07,348.19 1701.54,347.32 1703.06,346.47 1704.60,345.66 1706.17,344.87 1707.77,344.12 1709.40,343.39 1711.05,342.70 1712.73,342.03 1714.43,341.40 1716.16,340.80 1717.90,340.23 1719.67,339.69 1721.46,339.19 1723.27,338.72 1725.09,338.28 1726.92,337.88 1728.78,337.51 1730.64,337.17 1732.52,336.87 1734.41,336.61 1736.30,336.38 1738.21,336.18 1740.12,336.02 1742.03,335.90 1743.95,335.81 1745.88,335.75 1747.80,335.74 1747.80,347.74 1745.88,347.75 1743.95,347.81 1742.03,347.90 1740.12,348.02 1738.21,348.18 1736.30,348.38 1734.41,348.61 1732.52,348.87 1730.64,349.17 1728.78,349.51 1726.92,349.88 1725.09,350.28 1723.27,350.72 1721.46,351.19 1719.67,351.69 1717.90,352.23 1716.16,352.80 1714.43,353.40 1712.73,354.03 1711.05,354.70 1709.40,355.39 1707.77,356.12 1706.17,356.87 1704.60,357.66 1703.06,358.47 1701.54,359.32 1700.07,360.19 1698.62,361.08 1697.21,362.01 1695.83,362.96 1694.48,363.93 1693.18,364.93 1691.91,365.95 1690.68,367.00 1689.49,368.07 1688.34,369.16 1687.23,370.27 1686.16,371.40 1685.13,372.55 1684.15,373.72 1683.21,374.90 1682.31,376.11 1681.46,377.33 1680.65,378.56 1679.89,379.81 1679.18,381.08 1678.52,382.35 1677.90,383.64 1677.33,384.94 1676.80,386.25 1676.33,387.57 1675.91,388.90 1675.53,390.23 1675.20,391.57 1674.93,392.92 1674.70,394.27 1674.53,395.62 1674.40,396.98 1674.33,398.34 1674.30,399.70" fill="#7dd870" stroke="#7dd870" stroke-width="0.6"/><polygon points="1747.80,335.74 1749.72,335.75 1751.65,335.81 1753.57,335.90 1755.48,336.02 1757.39,336.18 1759.30,336.38 1761.19,336.61 1763.08,336.87 1764.96,337.17 1766.82,337.51 1768.68,337.88 1770.51,338.28 1772.33,338.72 1774.14,339.19 1775.93,339.69 1777.70,340.23 1779.44,340.80 1781.17,341.40 1782.87,342.03 1784.55,342.70 1786.20,343.39 1787.83,344.12 1789.43,344.87 1791.00,345.66 1792.54,346.47 1794.06,347.32 1795.53,348.19 1796.98,349.08 1798.39,350.01 1799.77,350.96 1801.12,351.93 1802.42,352.93 1803.69,353.95 1804.92,355.00 1806.11,356.07 1807.26,357.16 1808.37,358.27 1809.44,359.40 1810.47,360.55 1811.45,361.72 1812.39,362.90 1813.29,364.11 1814.14,365.33 1814.95,366.56 1815.71,367.81 1816.42,369.08 1817.08,370.35 1817.70,371.64 1818.27,372.94 1818.80,374.25 1819.27,375.57 1819.69,376.90 1820.07,378.23 1820.40,379.57 1820.67,380.92 1820.90,382.27 1821.07,383.62 1821.20,384.98 1821.27,386.34 1821.30,387.70 1821.30,399.70 1821.27,398.34 1821.20,396.98 1821.07,395.62 1820.90,394.27 1820.67,392.92 1820.40,391.57 1820.07,390.23 1819.69,388.90 1819.27,387.57 1818.80,386.25 1818.27,384.94 1817.70,383.64 1817.08,382.35 1816.42,381.08 1815.71,379.81 1814.95,378.56 1814.14,377.33 1813.29,376.11 1812.39,374.90 1811.45,373.72 1810.47,372.55 1809.44,371.40 1808.37,370.27 1807.26,369.16 1806.11,368.07 1804.92,367.00 1803.69,365.95 1802.42,364.93 1801.12,363.93 1799.77,362.96 1798.39,362.01 1796.98,361.08 1795.53,360.19 1794.06,359.32 1792.54,358.47 1791.00,357.66 1789.43,356.87 1787.83,356.12 1786.20,355.39 1784.55,354.70 1782.87,354.03 1781.17,353.40 1779.44,352.80 1777.70,352.23 1775.93,351.69 1774.14,351.19 1772.33,350.72 1770.51,350.28 1768.68,349.88 1766.82,349.51 1764.96,349.17 1763.08,348.87 1761.19,348.61 1759.30,348.38 1757.39,348.18 1755.48,348.02 1753.57,347.90 1751.65,347.81 1749.72,347.75 1747.80,347.74" fill="#0f6a66" stroke="#0f6a66" stroke-width="0.6"/><polygon points="1772.90,460.80 1770.18,461.24 1767.45,461.63 1764.70,461.97 1761.94,462.26 1759.17,462.49 1756.39,462.68 1753.61,462.81 1750.82,462.89 1748.03,462.92 1745.24,462.90 1742.46,462.83 1739.67,462.70 1736.89,462.53 1734.12,462.30 1731.36,462.02 1728.61,461.69 1725.88,461.31 1723.15,460.88 1720.45,460.40 1717.76,459.87 1715.10,459.28 1712.45,458.65 1709.84,457.97 1707.24,457.25 1704.68,456.47 1702.14,455.65 1699.64,454.78 1697.17,453.86 1694.73,452.90 1692.34,451.90 1689.97,450.85 1687.65,449.75 1685.37,448.62 1683.14,447.44 1680.94,446.22 1678.80,444.96 1676.70,443.66 1674.65,442.32 1672.65,440.95 1670.70,439.54 1668.80,438.09 1666.96,436.61 1665.18,435.10 1663.45,433.55 1661.78,431.97 1660.16,430.36 1658.61,428.72 1657.12,427.05 1655.69,425.36 1654.33,423.64 1653.03,421.90 1651.79,420.13 1650.62,418.34 1649.52,416.53 1648.49,414.69 1647.52,412.84 1646.62,410.98 1645.79,409.09 1645.04,407.20 1644.35,405.28 1643.73,403.36 1643.19,401.43 1642.71,399.48 1642.31,397.53 1641.98,395.57 1641.73,393.61 1641.55,391.64 1641.44,389.67 1641.40,387.70 1641.40,399.70 1641.44,401.67 1641.55,403.64 1641.73,405.61 1641.98,407.57 1642.31,409.53 1642.71,411.48 1643.19,413.43 1643.73,415.36 1644.35,417.28 1645.04,419.20 1645.79,421.09 1646.62,422.98 1647.52,424.84 1648.49,426.69 1649.52,428.53 1650.62,430.34 1651.79,432.13 1653.03,433.90 1654.33,435.64 1655.69,437.36 1657.12,439.05 1658.61,440.72 1660.16,442.36 1661.78,443.97 1663.45,445.55 1665.18,447.10 1666.96,448.61 1668.80,450.09 1670.70,451.54 1672.65,452.95 1674.65,454.32 1676.70,455.66 1678.80,456.96 1680.94,458.22 1683.14,459.44 1685.37,460.62 1687.65,461.75 1689.97,462.85 1692.34,463.90 1694.73,464.90 1697.17,465.86 1699.64,466.78 1702.14,467.65 1704.68,468.47 1707.24,469.25 1709.84,469.97 1712.45,470.65 1715.10,471.28 1717.76,471.87 1720.45,472.40 1723.15,472.88 1725.88,473.31 1728.61,473.69 1731.36,474.02 1734.12,474.30 1736.89,474.53 1739.67,474.70 1742.46,474.83 1745.24,474.90 1748.03,474.92 1750.82,474.89 1753.61,474.81 1756.39,474.68 1759.17,474.49 1761.94,474.26 1764.70,473.97 1767.45,473.63 1770.18,473.24 1772.90,472.80" fill="#7ad86c" stroke="#7ad86c" stroke-width="0.6"/><polygon points="1854.20,387.70 1854.16,389.70 1854.05,391.71 1853.86,393.71 1853.60,395.70 1853.26,397.70 1852.84,399.68 1852.35,401.65 1851.79,403.62 1851.15,405.57 1850.44,407.51 1849.66,409.44 1848.80,411.35 1847.88,413.25 1846.88,415.12 1845.81,416.98 1844.67,418.82 1843.46,420.63 1842.19,422.42 1840.85,424.19 1839.44,425.93 1837.96,427.64 1836.43,429.33 1834.83,430.98 1833.16,432.60 1831.44,434.20 1829.66,435.76 1827.82,437.28 1825.92,438.77 1823.97,440.23 1821.96,441.64 1819.90,443.02 1817.79,444.36 1815.63,445.66 1813.42,446.91 1811.16,448.13 1808.86,449.30 1806.52,450.43 1804.14,451.52 1801.71,452.55 1799.25,453.55 1796.75,454.49 1794.21,455.39 1791.64,456.24 1789.04,457.04 1786.41,457.80 1783.76,458.50 1781.08,459.15 1778.37,459.75 1775.65,460.30 1772.90,460.80 1772.90,472.80 1775.65,472.30 1778.37,471.75 1781.08,471.15 1783.76,470.50 1786.41,469.80 1789.04,469.04 1791.64,468.24 1794.21,467.39 1796.75,466.49 1799.25,465.55 1801.71,464.55 1804.14,463.52 1806.52,462.43 1808.86,461.30 1811.16,460.13 1813.42,458.91 1815.63,457.66 1817.79,456.36 1819.90,455.02 1821.96,453.64 1823.97,452.23 1825.92,450.77 1827.82,449.28 1829.66,447.76 1831.44,446.20 1833.16,444.60 1834.83,442.98 1836.43,441.33 1837.96,439.64 1839.44,437.93 1840.85,436.19 1842.19,434.42 1843.46,432.63 1844.67,430.82 1845.81,428.98 1846.88,427.12 1847.88,425.25 1848.80,423.35 1849.66,421.44 1850.44,419.51 1851.15,417.57 1851.79,415.62 1852.35,413.65 1852.84,411.68 1853.26,409.70 1853.60,407.70 1853.86,405.71 1854.05,403.71 1854.16,401.70 1854.20,399.70" fill="#10706b" stroke="#10706b" stroke-width="0.6"/><polygon points="1772.90,460.80 1770.18,461.24 1767.45,461.63 1764.70,461.97 1761.94,462.26 1759.18,462.49 1756.40,462.68 1753.62,462.81 1750.84,462.89 1748.05,462.92 1745.26,462.90 1742.48,462.83 1739.69,462.71 1736.92,462.53 1734.15,462.30 1731.39,462.02 1728.64,461.70 1725.91,461.31 1723.19,460.88 1720.48,460.40 1717.80,459.87 1715.13,459.29 1712.49,458.66 1709.87,457.98 1707.28,457.26 1704.72,456.48 1702.19,455.66 1699.68,454.79 1697.21,453.88 1694.78,452.92 1692.38,451.92 1690.02,450.87 1687.70,449.78 1685.42,448.64 1683.18,447.46 1680.99,446.25 1678.85,444.99 1676.75,443.69 1674.70,442.36 1672.70,440.99 1670.75,439.58 1668.85,438.13 1667.01,436.65 1665.22,435.14 1663.49,433.59 1661.82,432.02 1660.21,430.41 1658.66,428.77 1657.17,427.11 1655.74,425.41 1654.37,423.70 1653.07,421.95 1651.83,420.19 1650.66,418.40 1649.56,416.59 1648.52,414.76 1647.55,412.91 1646.65,411.05 1645.82,409.16 1645.06,407.27 1644.37,405.36 1643.75,403.44 1643.21,401.51 1642.73,399.56 1642.33,397.61 1642.00,395.66 1641.74,393.69 1641.55,391.73 1641.44,389.76 1641.40,387.79 1641.43,385.82 1641.54,383.85 1641.72,381.88 1641.97,379.92 1642.30,377.96 1642.69,376.01 1643.16,374.07 1643.70,372.13 1644.32,370.21 1645.00,368.30 1645.75,366.40 1646.58,364.52 1647.47,362.65 1648.43,360.80 1649.46,358.97 1650.56,357.16 1651.73,355.37 1652.96,353.60 1654.25,351.86 1655.61,350.14 1657.04,348.44 1658.52,346.78 1660.07,345.14 1661.68,343.53 1663.34,341.95 1665.07,340.40 1666.85,338.88 1668.69,337.40 1670.58,335.95 1672.52,334.54 1674.52,333.16 1676.56,331.82 1678.66,330.52 1680.80,329.26 1682.99,328.04 1685.22,326.86 1687.50,325.72 1689.81,324.63 1692.17,323.58 1694.56,322.57 1697.00,321.60 1699.46,320.69 1701.96,319.81 1704.49,318.99 1707.05,318.21 1709.64,317.48 1712.26,316.80 1714.90,316.16 1717.56,315.58 1720.24,315.04 1722.94,314.56 1725.66,314.12 1728.40,313.74 1731.14,313.40 1733.90,313.12 1736.67,312.89 1739.45,312.71 1742.23,312.58 1745.01,312.50 1747.80,312.48 1747.80,335.74 1745.87,335.75 1743.95,335.81 1742.03,335.90 1740.11,336.02 1738.20,336.18 1736.29,336.38 1734.40,336.61 1732.51,336.87 1730.63,337.17 1728.76,337.51 1726.91,337.88 1725.07,338.28 1723.25,338.72 1721.44,339.19 1719.65,339.70 1717.88,340.23 1716.14,340.81 1714.41,341.41 1712.70,342.04 1711.03,342.71 1709.37,343.40 1707.74,344.13 1706.14,344.89 1704.57,345.67 1703.03,346.49 1701.52,347.33 1700.04,348.20 1698.59,349.10 1697.18,350.03 1695.80,350.98 1694.45,351.95 1693.15,352.95 1691.88,353.98 1690.65,355.02 1689.46,356.09 1688.31,357.19 1687.20,358.30 1686.13,359.43 1685.10,360.58 1684.12,361.75 1683.18,362.94 1682.28,364.15 1681.43,365.37 1680.63,366.60 1679.87,367.86 1679.16,369.12 1678.49,370.40 1677.88,371.69 1677.31,372.99 1676.79,374.30 1676.31,375.62 1675.89,376.95 1675.52,378.28 1675.19,379.62 1674.92,380.97 1674.69,382.32 1674.52,383.68 1674.40,385.04 1674.32,386.40 1674.30,387.76 1674.33,389.12 1674.41,390.48 1674.53,391.84 1674.71,393.20 1674.94,394.55 1675.22,395.90 1675.55,397.24 1675.93,398.57 1676.35,399.90 1676.83,401.22 1677.36,402.53 1677.93,403.83 1678.55,405.12 1679.22,406.39 1679.94,407.66 1680.70,408.91 1681.51,410.14 1682.36,411.36 1683.26,412.57 1684.20,413.75 1685.19,414.92 1686.22,416.07 1687.29,417.20 1688.41,418.31 1689.56,419.40 1690.76,420.47 1691.99,421.52 1693.26,422.54 1694.57,423.54 1695.92,424.51 1697.30,425.46 1698.72,426.38 1700.17,427.28 1701.65,428.14 1703.16,428.98 1704.71,429.80 1706.28,430.58 1707.89,431.34 1709.52,432.06 1711.17,432.75 1712.86,433.42 1714.56,434.05 1716.29,434.65 1718.04,435.21 1719.81,435.75 1721.60,436.25 1723.41,436.72 1725.23,437.15 1727.07,437.56 1728.93,437.92 1730.80,438.25 1732.68,438.55 1734.56,438.82 1736.46,439.04 1738.37,439.24 1740.28,439.39 1742.20,439.51 1744.12,439.60 1746.05,439.65 1747.97,439.66 1749.90,439.64 1751.82,439.59 1753.74,439.49 1755.66,439.37 1757.57,439.20 1759.48,439.00 1761.37,438.77 1763.26,438.50 1765.14,438.20" fill="#90ee80" stroke="#90ee80" stroke-width="0.6"/><polygon points="1747.80,312.48 1750.61,312.50 1753.41,312.58 1756.22,312.71 1759.01,312.89 1761.80,313.13 1764.58,313.42 1767.35,313.76 1770.10,314.15 1772.84,314.59 1775.56,315.08 1778.26,315.62 1780.94,316.22 1783.60,316.86 1786.23,317.55 1788.83,318.29 1791.41,319.08 1793.96,319.92 1796.47,320.81 1798.95,321.74 1801.40,322.72 1803.80,323.74 1806.17,324.81 1808.50,325.92 1810.78,327.07 1813.03,328.27 1815.22,329.51 1817.37,330.78 1819.47,332.10 1821.52,333.46 1823.52,334.85 1825.47,336.28 1827.36,337.75 1829.20,339.25 1830.98,340.79 1832.70,342.36 1834.36,343.96 1835.96,345.59 1837.51,347.25 1838.98,348.93 1840.40,350.65 1841.75,352.39 1843.04,354.16 1844.25,355.94 1845.41,357.76 1846.49,359.59 1847.51,361.44 1848.45,363.31 1849.33,365.19 1850.13,367.10 1850.86,369.01 1851.53,370.94 1852.12,372.88 1852.63,374.84 1853.08,376.80 1853.45,378.76 1853.74,380.74 1853.97,382.72 1854.12,384.70 1854.19,386.69 1854.19,388.67 1854.12,390.66 1853.97,392.64 1853.75,394.62 1853.45,396.59 1853.09,398.56 1852.64,400.52 1852.13,402.47 1851.54,404.41 1850.88,406.34 1850.15,408.26 1849.34,410.16 1848.47,412.05 1847.53,413.92 1846.51,415.77 1845.43,417.60 1844.28,419.42 1843.06,421.21 1841.78,422.97 1840.43,424.71 1839.02,426.43 1837.54,428.12 1836.00,429.78 1834.40,431.41 1832.74,433.01 1831.01,434.58 1829.24,436.11 1827.40,437.62 1825.51,439.08 1823.56,440.52 1821.57,441.91 1819.52,443.27 1817.42,444.59 1815.27,445.87 1813.07,447.11 1810.83,448.30 1808.55,449.46 1806.22,450.57 1803.86,451.64 1801.45,452.66 1799.01,453.64 1796.53,454.57 1794.01,455.46 1791.47,456.30 1788.89,457.09 1786.29,457.83 1783.66,458.52 1781.00,459.17 1778.32,459.76 1775.62,460.31 1772.90,460.80 1765.14,438.20 1767.02,437.86 1768.88,437.48 1770.73,437.07 1772.57,436.63 1774.39,436.15 1776.19,435.63 1777.96,435.09 1779.72,434.51 1781.46,433.90 1783.17,433.25 1784.86,432.58 1786.52,431.87 1788.16,431.13 1789.76,430.36 1791.34,429.56 1792.89,428.74 1794.41,427.88 1795.89,427.00 1797.34,426.09 1798.76,425.15 1800.14,424.19 1801.48,423.20 1802.79,422.18 1804.05,421.14 1805.28,420.08 1806.47,419.00 1807.62,417.89 1808.73,416.77 1809.79,415.62 1810.81,414.45 1811.79,413.27 1812.72,412.07 1813.61,410.85 1814.45,409.61 1815.24,408.36 1815.99,407.09 1816.69,405.81 1817.34,404.52 1817.95,403.22 1818.50,401.90 1819.01,400.58 1819.46,399.25 1819.87,397.91 1820.22,396.56 1820.53,395.20 1820.78,393.84 1820.99,392.48 1821.14,391.11 1821.24,389.74 1821.29,388.37 1821.29,387.00 1821.24,385.63 1821.14,384.26 1820.98,382.89 1820.78,381.53 1820.52,380.17 1820.22,378.81 1819.86,377.47 1819.45,376.12 1819.00,374.79 1818.49,373.47 1817.93,372.15 1817.33,370.85 1816.68,369.56 1815.97,368.28 1815.23,367.01 1814.43,365.76 1813.59,364.53 1812.70,363.31 1811.77,362.11 1810.79,360.92 1809.77,359.76 1808.70,358.61 1807.60,357.48 1806.45,356.38 1805.26,355.29 1804.03,354.23 1802.76,353.20 1801.45,352.18 1800.11,351.19 1798.73,350.23 1797.31,349.29 1795.86,348.38 1794.37,347.50 1792.86,346.64 1791.31,345.82 1789.73,345.02 1788.12,344.25 1786.49,343.52 1784.82,342.81 1783.13,342.13 1781.42,341.49 1779.68,340.88 1777.93,340.30 1776.15,339.76 1774.35,339.24 1772.53,338.76 1770.69,338.32 1768.84,337.91 1766.98,337.54 1765.10,337.19 1763.21,336.89 1761.30,336.62 1759.39,336.39 1757.47,336.19 1755.55,336.02 1753.61,335.90 1751.68,335.81 1749.74,335.75 1747.80,335.74" fill="#268582" stroke="#268582" stroke-width="0.6"/></svg>
<div class="t" style="left:1534.46px;top:387.68px;font-size:13.6px;line-height:13.6px;color:#5b5b5b;transform:scaleX(0.9385);transform-origin:0 0;">NFC (53.79%)</div>
<div class="t" style="left:1889.53px;top:366.28px;font-size:13.6px;line-height:13.6px;color:#5b5b5b;transform:scaleX(0.9710);transform-origin:0 0;">Password (46.21%)</div>
<svg style="position:absolute;left:0;top:0" width="2185" height="1213"><polyline points="1622.80,397.20 1641.60,395.80" fill="none" stroke="#90ee80" stroke-width="1"/></svg>
<svg style="position:absolute;left:0;top:0" width="2185" height="1213"><polyline points="1854.50,378.70 1875.00,376.40" fill="none" stroke="#268582" stroke-width="1"/></svg>
<div style="position:absolute;left:1689.00px;top:534.30px;width:10.6px;height:10.6px;border-radius:50%;background:#90ee80;"></div>
<div class="t" style="left:1705.96px;top:533.40px;font-size:12.4px;line-height:12.4px;color:#3a3d46;transform:scaleX(0.8362);transform-origin:0 0;">NFC</div>
<div style="position:absolute;left:1741.10px;top:534.30px;width:10.6px;height:10.6px;border-radius:50%;background:#268582;"></div>
<div class="t" style="left:1758.68px;top:533.40px;font-size:12.4px;line-height:12.4px;color:#3a3d46;transform:scaleX(0.9232);transform-origin:0 0;">Password</div>
<svg style="position:absolute;left:0;top:0" width="2185" height="1213"><polygon points="1389.05,751.38 1390.67,750.59 1392.32,749.83 1394.00,749.11 1395.70,748.41 1397.44,747.75 1399.19,747.13 1400.97,746.53 1402.77,745.97 1404.59,745.44 1406.43,744.95 1408.29,744.49 1410.17,744.07 1412.06,743.69 1413.96,743.34 1415.88,743.02 1417.81,742.75 1419.74,742.50 1421.69,742.30 1423.64,742.13 1425.60,742.00 1427.57,741.91 1429.53,741.85 1431.50,741.84 1431.50,753.84 1429.53,753.85 1427.57,753.91 1425.60,754.00 1423.64,754.13 1421.69,754.30 1419.74,754.50 1417.81,754.75 1415.88,755.02 1413.96,755.34 1412.06,755.69 1410.17,756.07 1408.29,756.49 1406.43,756.95 1404.59,757.44 1402.77,757.97 1400.97,758.53 1399.19,759.13 1397.44,759.75 1395.70,760.41 1394.00,761.11 1392.32,761.83 1390.67,762.59 1389.05,763.38" fill="#c0002f" stroke="#c0002f" stroke-width="0.6"/><polygon points="1358.31,789.01 1358.52,787.61 1358.78,786.23 1359.10,784.84 1359.47,783.47 1359.89,782.10 1360.36,780.74 1360.88,779.39 1361.46,778.05 1362.09,776.72 1362.76,775.40 1363.49,774.10 1364.26,772.81 1365.09,771.53 1365.96,770.28 1366.88,769.04 1367.85,767.81 1368.86,766.61 1369.92,765.43 1371.03,764.26 1372.18,763.12 1373.37,762.00 1374.60,760.91 1375.88,759.83 1377.19,758.79 1378.55,757.76 1379.94,756.77 1381.37,755.80 1382.84,754.86 1384.34,753.94 1385.88,753.06 1387.45,752.20 1389.05,751.38 1389.05,763.38 1387.45,764.20 1385.88,765.06 1384.34,765.94 1382.84,766.86 1381.37,767.80 1379.94,768.77 1378.55,769.76 1377.19,770.79 1375.88,771.83 1374.60,772.91 1373.37,774.00 1372.18,775.12 1371.03,776.26 1369.92,777.43 1368.86,778.61 1367.85,779.81 1366.88,781.04 1365.96,782.28 1365.09,783.53 1364.26,784.81 1363.49,786.10 1362.76,787.40 1362.09,788.72 1361.46,790.05 1360.88,791.39 1360.36,792.74 1359.89,794.10 1359.47,795.47 1359.10,796.84 1358.78,798.23 1358.52,799.61 1358.31,801.01" fill="#7dd870" stroke="#7dd870" stroke-width="0.6"/><polygon points="1358.00,793.80 1358.03,792.20 1358.14,790.60 1358.31,789.01 1358.31,801.01 1358.14,802.60 1358.03,804.20 1358.00,805.80" fill="#0f6a66" stroke="#0f6a66" stroke-width="0.6"/><polygon points="1431.45,741.84 1433.38,741.85 1435.30,741.91 1437.22,741.99 1439.14,742.12 1441.05,742.28 1442.96,742.47 1444.85,742.70 1446.74,742.97 1448.62,743.26 1450.49,743.60 1452.34,743.97 1454.18,744.37 1456.00,744.81 1457.81,745.28 1459.60,745.78 1461.36,746.32 1463.11,746.89 1464.84,747.49 1466.54,748.12 1468.22,748.79 1469.88,749.48 1471.51,750.21 1473.11,750.96 1474.68,751.75 1476.22,752.56 1477.73,753.40 1479.22,754.27 1480.66,755.17 1482.08,756.09 1483.46,757.04 1484.80,758.02 1486.11,759.02 1487.38,760.04 1488.61,761.09 1489.80,762.16 1490.95,763.25 1492.06,764.36 1493.13,765.49 1494.16,766.64 1495.15,767.81 1496.09,769.00 1496.98,770.20 1497.83,771.42 1498.64,772.66 1499.40,773.91 1500.11,775.17 1500.78,776.45 1501.40,777.74 1501.97,779.04 1502.49,780.35 1502.97,781.66 1503.39,782.99 1503.77,784.33 1504.09,785.67 1504.37,787.01 1504.60,788.37 1504.77,789.72 1504.90,791.08 1504.97,792.44 1505.00,793.80 1505.00,805.80 1504.97,804.44 1504.90,803.08 1504.77,801.72 1504.60,800.37 1504.37,799.01 1504.09,797.67 1503.77,796.33 1503.39,794.99 1502.97,793.66 1502.49,792.35 1501.97,791.04 1501.40,789.74 1500.78,788.45 1500.11,787.17 1499.40,785.91 1498.64,784.66 1497.83,783.42 1496.98,782.20 1496.09,781.00 1495.15,779.81 1494.16,778.64 1493.13,777.49 1492.06,776.36 1490.95,775.25 1489.80,774.16 1488.61,773.09 1487.38,772.04 1486.11,771.02 1484.80,770.02 1483.46,769.04 1482.08,768.09 1480.66,767.17 1479.22,766.27 1477.73,765.40 1476.22,764.56 1474.68,763.75 1473.11,762.96 1471.51,762.21 1469.88,761.48 1468.22,760.79 1466.54,760.12 1464.84,759.49 1463.11,758.89 1461.36,758.32 1459.60,757.78 1457.81,757.28 1456.00,756.81 1454.18,756.37 1452.34,755.97 1450.49,755.60 1448.62,755.26 1446.74,754.97 1444.85,754.70 1442.96,754.47 1441.05,754.28 1439.14,754.12 1437.22,753.99 1435.30,753.91 1433.38,753.85 1431.45,753.84" fill="#6c0028" stroke="#6c0028" stroke-width="0.6"/><polygon points="1364.44,852.75 1362.27,851.48 1360.15,850.18 1358.08,848.83 1356.06,847.45 1354.10,846.03 1352.18,844.57 1350.32,843.08 1348.52,841.56 1346.77,840.00 1345.08,838.41 1343.46,836.79 1341.89,835.14 1340.38,833.46 1338.94,831.75 1337.56,830.02 1336.25,828.26 1335.00,826.48 1333.82,824.68 1332.71,822.85 1331.66,821.01 1330.68,819.14 1329.78,817.26 1328.94,815.36 1328.17,813.45 1327.48,811.53 1326.86,809.59 1326.31,807.64 1325.83,805.68 1325.42,803.71 1325.09,801.74 1324.83,799.76 1324.65,797.77 1324.54,795.79 1324.50,793.80 1324.50,805.80 1324.54,807.79 1324.65,809.77 1324.83,811.76 1325.09,813.74 1325.42,815.71 1325.83,817.68 1326.31,819.64 1326.86,821.59 1327.48,823.53 1328.17,825.45 1328.94,827.36 1329.78,829.26 1330.68,831.14 1331.66,833.01 1332.71,834.85 1333.82,836.68 1335.00,838.48 1336.25,840.26 1337.56,842.02 1338.94,843.75 1340.38,845.46 1341.89,847.14 1343.46,848.79 1345.08,850.41 1346.77,852.00 1348.52,853.56 1350.32,855.08 1352.18,856.57 1354.10,858.03 1356.06,859.45 1358.08,860.83 1360.15,862.18 1362.27,863.48 1364.44,864.75" fill="#10706b" stroke="#10706b" stroke-width="0.6"/><polygon points="1476.27,862.51 1473.68,863.32 1471.07,864.08 1468.44,864.80 1465.77,865.46 1463.08,866.08 1460.37,866.64 1457.64,867.16 1454.89,867.62 1452.13,868.03 1449.35,868.39 1446.56,868.70 1443.76,868.95 1440.95,869.15 1438.13,869.30 1435.31,869.40 1432.48,869.45 1429.66,869.44 1426.83,869.38 1424.01,869.26 1421.20,869.10 1418.39,868.88 1415.59,868.61 1412.80,868.29 1410.03,867.91 1407.27,867.48 1404.52,867.01 1401.80,866.48 1399.10,865.90 1396.42,865.27 1393.76,864.59 1391.13,863.86 1388.53,863.08 1385.95,862.25 1383.41,861.38 1380.91,860.46 1378.44,859.49 1376.00,858.48 1373.61,857.42 1371.25,856.32 1368.94,855.17 1366.67,853.98 1364.44,852.75 1364.44,864.75 1366.67,865.98 1368.94,867.17 1371.25,868.32 1373.61,869.42 1376.00,870.48 1378.44,871.49 1380.91,872.46 1383.41,873.38 1385.95,874.25 1388.53,875.08 1391.13,875.86 1393.76,876.59 1396.42,877.27 1399.10,877.90 1401.80,878.48 1404.52,879.01 1407.27,879.48 1410.03,879.91 1412.80,880.29 1415.59,880.61 1418.39,880.88 1421.20,881.10 1424.01,881.26 1426.83,881.38 1429.66,881.44 1432.48,881.45 1435.31,881.40 1438.13,881.30 1440.95,881.15 1443.76,880.95 1446.56,880.70 1449.35,880.39 1452.13,880.03 1454.89,879.62 1457.64,879.16 1460.37,878.64 1463.08,878.08 1465.77,877.46 1468.44,876.80 1471.07,876.08 1473.68,875.32 1476.27,874.51" fill="#e08d48" stroke="#e08d48" stroke-width="0.6"/><polygon points="1534.44,814.45 1533.61,816.40 1532.71,818.34 1531.74,820.26 1530.70,822.16 1529.58,824.04 1528.39,825.90 1527.13,827.73 1525.80,829.54 1524.41,831.33 1522.94,833.09 1521.41,834.81 1519.81,836.51 1518.15,838.18 1516.43,839.82 1514.64,841.42 1512.80,842.98 1510.89,844.52 1508.93,846.01 1506.91,847.47 1504.84,848.88 1502.71,850.26 1500.53,851.60 1498.30,852.89 1496.03,854.15 1493.70,855.35 1491.33,856.52 1488.92,857.63 1486.47,858.70 1483.97,859.73 1481.44,860.70 1478.87,861.63 1476.27,862.51 1476.27,874.51 1478.87,873.63 1481.44,872.70 1483.97,871.73 1486.47,870.70 1488.92,869.63 1491.33,868.52 1493.70,867.35 1496.03,866.15 1498.30,864.89 1500.53,863.60 1502.71,862.26 1504.84,860.88 1506.91,859.47 1508.93,858.01 1510.89,856.52 1512.80,854.98 1514.64,853.42 1516.43,851.82 1518.15,850.18 1519.81,848.51 1521.41,846.81 1522.94,845.09 1524.41,843.33 1525.80,841.54 1527.13,839.73 1528.39,837.90 1529.58,836.04 1530.70,834.16 1531.74,832.26 1532.71,830.34 1533.61,828.40 1534.44,826.45" fill="#3a2fba" stroke="#3a2fba" stroke-width="0.6"/><polygon points="1538.50,793.80 1538.46,795.89 1538.34,797.98 1538.13,800.07 1537.85,802.15 1537.48,804.22 1537.03,806.29 1536.50,808.35 1535.89,810.40 1535.20,812.43 1534.44,814.45 1534.44,826.45 1535.20,824.43 1535.89,822.40 1536.50,820.35 1537.03,818.29 1537.48,816.22 1537.85,814.15 1538.13,812.07 1538.34,809.98 1538.46,807.89 1538.50,805.80" fill="#70002c" stroke="#70002c" stroke-width="0.6"/><polygon points="1369.70,732.04 1372.06,730.90 1374.46,729.79 1376.91,728.74 1379.39,727.73 1381.91,726.77 1384.47,725.85 1387.06,724.99 1389.68,724.17 1392.33,723.40 1395.01,722.69 1397.71,722.02 1400.44,721.41 1403.20,720.85 1405.97,720.34 1408.76,719.88 1411.57,719.48 1414.39,719.12 1417.22,718.83 1420.06,718.58 1422.92,718.39 1425.77,718.26 1428.64,718.18 1431.50,718.15 1431.50,741.84 1429.53,741.85 1427.57,741.91 1425.60,742.00 1423.64,742.13 1421.69,742.30 1419.74,742.50 1417.81,742.75 1415.88,743.02 1413.96,743.34 1412.06,743.69 1410.17,744.07 1408.29,744.49 1406.43,744.95 1404.59,745.44 1402.77,745.97 1400.97,746.53 1399.19,747.13 1397.44,747.75 1395.70,748.41 1394.00,749.11 1392.32,749.83 1390.67,750.59 1389.05,751.38" fill="#d90f4b" stroke="#d90f4b" stroke-width="0.6"/><polygon points="1324.96,786.82 1325.26,784.79 1325.64,782.77 1326.10,780.76 1326.64,778.76 1327.25,776.76 1327.94,774.78 1328.70,772.82 1329.54,770.86 1330.45,768.93 1331.43,767.01 1332.49,765.12 1333.62,763.24 1334.82,761.38 1336.09,759.55 1337.43,757.75 1338.84,755.97 1340.32,754.22 1341.86,752.49 1343.47,750.80 1345.14,749.14 1346.87,747.51 1348.67,745.91 1350.52,744.35 1352.44,742.83 1354.41,741.34 1356.44,739.89 1358.52,738.48 1360.66,737.11 1362.85,735.78 1365.08,734.49 1367.37,733.24 1369.70,732.04 1389.05,751.38 1387.45,752.20 1385.88,753.06 1384.34,753.94 1382.84,754.86 1381.37,755.80 1379.94,756.77 1378.55,757.76 1377.19,758.79 1375.88,759.83 1374.60,760.91 1373.37,762.00 1372.18,763.12 1371.03,764.26 1369.92,765.43 1368.86,766.61 1367.85,767.81 1366.88,769.04 1365.96,770.28 1365.09,771.53 1364.26,772.81 1363.49,774.10 1362.76,775.40 1362.09,776.72 1361.46,778.05 1360.88,779.39 1360.36,780.74 1359.89,782.10 1359.47,783.47 1359.10,784.84 1358.78,786.23 1358.52,787.61 1358.31,789.01" fill="#90ee80" stroke="#90ee80" stroke-width="0.6"/><polygon points="1364.44,852.75 1362.24,851.47 1360.10,850.14 1358.00,848.78 1355.95,847.37 1353.96,845.93 1352.02,844.45 1350.14,842.94 1348.32,841.39 1346.56,839.80 1344.85,838.19 1343.21,836.54 1341.63,834.86 1340.12,833.15 1338.67,831.42 1337.28,829.66 1335.97,827.87 1334.72,826.06 1333.53,824.22 1332.42,822.37 1331.38,820.49 1330.41,818.60 1329.51,816.68 1328.69,814.75 1327.93,812.81 1327.25,810.85 1326.65,808.88 1326.12,806.90 1325.66,804.91 1325.28,802.92 1324.97,800.91 1324.74,798.90 1324.59,796.89 1324.51,794.88 1324.51,792.86 1324.58,790.84 1324.73,788.83 1324.96,786.82 1358.31,789.01 1358.16,790.39 1358.06,791.77 1358.01,793.15 1358.01,794.54 1358.06,795.92 1358.17,797.31 1358.33,798.69 1358.54,800.06 1358.80,801.43 1359.11,802.80 1359.48,804.16 1359.89,805.51 1360.36,806.86 1360.88,808.19 1361.44,809.52 1362.06,810.83 1362.73,812.13 1363.44,813.42 1364.21,814.70 1365.02,815.96 1365.88,817.20 1366.78,818.43 1367.73,819.64 1368.73,820.83 1369.77,822.01 1370.85,823.16 1371.98,824.29 1373.15,825.40 1374.36,826.49 1375.62,827.55 1376.91,828.59 1378.24,829.61 1379.61,830.60 1381.01,831.56 1382.45,832.50 1383.93,833.41 1385.44,834.29" fill="#268582" stroke="#268582" stroke-width="0.6"/><polygon points="1476.27,862.51 1473.68,863.32 1471.07,864.08 1468.44,864.80 1465.77,865.46 1463.08,866.08 1460.37,866.64 1457.64,867.16 1454.89,867.62 1452.13,868.03 1449.35,868.39 1446.56,868.70 1443.76,868.95 1440.95,869.15 1438.13,869.30 1435.31,869.40 1432.48,869.45 1429.66,869.44 1426.83,869.38 1424.01,869.26 1421.20,869.10 1418.39,868.88 1415.59,868.61 1412.80,868.29 1410.03,867.91 1407.27,867.48 1404.52,867.01 1401.80,866.48 1399.10,865.90 1396.42,865.27 1393.76,864.59 1391.13,863.86 1388.53,863.08 1385.95,862.25 1383.41,861.38 1380.91,860.46 1378.44,859.49 1376.00,858.48 1373.61,857.42 1371.25,856.32 1368.94,855.17 1366.67,853.98 1364.44,852.75 1385.44,834.29 1386.96,835.14 1388.52,835.96 1390.11,836.74 1391.73,837.50 1393.38,838.23 1395.05,838.92 1396.75,839.59 1398.47,840.22 1400.21,840.82 1401.98,841.39 1403.77,841.92 1405.58,842.42 1407.40,842.89 1409.24,843.32 1411.10,843.72 1412.97,844.09 1414.85,844.41 1416.75,844.71 1418.66,844.96 1420.57,845.19 1422.49,845.37 1424.42,845.52 1426.36,845.64 1428.29,845.72 1430.23,845.76 1432.18,845.76 1434.12,845.73 1436.05,845.66 1437.99,845.56 1439.92,845.42 1441.84,845.25 1443.76,845.04 1445.67,844.79 1447.57,844.51 1449.46,844.19 1451.33,843.84 1453.19,843.45 1455.04,843.03 1456.87,842.57 1458.68,842.08 1460.48,841.56 1462.25,841.00" fill="#f7a35c" stroke="#f7a35c" stroke-width="0.6"/><polygon points="1534.44,814.45 1533.61,816.40 1532.71,818.34 1531.74,820.26 1530.70,822.16 1529.58,824.04 1528.39,825.90 1527.13,827.73 1525.80,829.54 1524.41,831.33 1522.94,833.09 1521.41,834.81 1519.81,836.51 1518.15,838.18 1516.43,839.82 1514.64,841.42 1512.80,842.98 1510.89,844.52 1508.93,846.01 1506.91,847.47 1504.84,848.88 1502.71,850.26 1500.53,851.60 1498.30,852.89 1496.03,854.15 1493.70,855.35 1491.33,856.52 1488.92,857.63 1486.47,858.70 1483.97,859.73 1481.44,860.70 1478.87,861.63 1476.27,862.51 1462.25,841.00 1464.04,840.39 1465.80,839.76 1467.54,839.09 1469.26,838.38 1470.94,837.65 1472.60,836.88 1474.23,836.08 1475.82,835.25 1477.39,834.39 1478.92,833.50 1480.42,832.58 1481.88,831.64 1483.30,830.66 1484.69,829.66 1486.04,828.64 1487.34,827.59 1488.61,826.51 1489.84,825.41 1491.02,824.29 1492.16,823.14 1493.26,821.97 1494.31,820.79 1495.32,819.58 1496.28,818.35 1497.19,817.11 1498.06,815.85 1498.87,814.57 1499.64,813.28 1500.36,811.98 1501.03,810.66 1501.64,809.33 1502.21,807.98" fill="#4b3fd2" stroke="#4b3fd2" stroke-width="0.6"/><polygon points="1431.43,718.15 1434.26,718.18 1437.08,718.25 1439.90,718.38 1442.71,718.57 1445.52,718.80 1448.31,719.09 1451.09,719.43 1453.86,719.82 1456.62,720.26 1459.35,720.76 1462.07,721.30 1464.77,721.90 1467.44,722.55 1470.09,723.24 1472.71,723.99 1475.30,724.78 1477.86,725.62 1480.39,726.51 1482.89,727.45 1485.35,728.43 1487.77,729.46 1490.15,730.53 1492.49,731.64 1494.79,732.80 1497.05,734.01 1499.26,735.25 1501.42,736.54 1503.53,737.86 1505.60,739.22 1507.61,740.63 1509.57,742.06 1511.47,743.54 1513.32,745.05 1515.11,746.59 1516.84,748.17 1518.52,749.78 1520.13,751.42 1521.68,753.09 1523.17,754.78 1524.60,756.51 1525.96,758.26 1527.25,760.03 1528.48,761.83 1529.64,763.65 1530.73,765.49 1531.75,767.36 1532.70,769.24 1533.58,771.13 1534.39,773.05 1535.13,774.97 1535.80,776.91 1536.39,778.87 1536.92,780.83 1537.36,782.80 1537.74,784.78 1538.04,786.77 1538.26,788.76 1538.41,790.75 1538.49,792.75 1538.49,794.74 1538.42,796.74 1538.27,798.73 1538.05,800.73 1537.76,802.71 1537.39,804.69 1536.94,806.66 1536.42,808.63 1535.83,810.58 1535.17,812.52 1534.44,814.45 1502.21,807.98 1502.71,806.66 1503.17,805.33 1503.57,803.98 1503.93,802.64 1504.23,801.28 1504.49,799.92 1504.69,798.56 1504.84,797.19 1504.94,795.82 1504.99,794.45 1504.99,793.08 1504.94,791.71 1504.84,790.34 1504.68,788.97 1504.48,787.60 1504.22,786.24 1503.91,784.89 1503.55,783.54 1503.15,782.20 1502.69,780.87 1502.18,779.54 1501.62,778.23 1501.02,776.93 1500.36,775.64 1499.66,774.36 1498.91,773.09 1498.11,771.84 1497.27,770.61 1496.38,769.39 1495.45,768.18 1494.47,767.00 1493.45,765.83 1492.38,764.69 1491.27,763.56 1490.12,762.46 1488.93,761.37 1487.70,760.31 1486.43,759.28 1485.12,758.26 1483.78,757.27 1482.40,756.31 1480.98,755.37 1479.53,754.46 1478.04,753.58 1476.53,752.73 1474.98,751.90 1473.40,751.10 1471.79,750.34 1470.15,749.60 1468.49,748.89 1466.80,748.22 1465.08,747.58 1463.35,746.97 1461.59,746.39 1459.81,745.84 1458.01,745.33 1456.19,744.85 1454.35,744.41 1452.50,744.00 1450.63,743.63 1448.75,743.29 1446.86,742.98 1444.96,742.71 1443.05,742.48 1441.13,742.28 1439.20,742.12 1437.27,742.00 1435.33,741.91 1433.39,741.85 1431.45,741.84" fill="#8a0038" stroke="#8a0038" stroke-width="0.6"/></svg>
<div class="t" style="left:1185.02px;top:696.98px;font-size:13.6px;line-height:13.6px;color:#5b5b5b;transform:scaleX(0.9815);transform-origin:0 0;">Honeywell CN70 (9.80%)</div>
<div class="t" style="left:1213.30px;top:737.78px;font-size:13.6px;line-height:13.6px;color:#5b5b5b;transform:scaleX(0.9416);transform-origin:0 0;">TC75x (13.73%)</div>
<div class="t" style="left:1177.00px;top:818.88px;font-size:13.6px;line-height:13.6px;color:#5b5b5b;transform:scaleX(0.9406);transform-origin:0 0;">Zebra MC45 (15.69%)</div>
<div class="t" style="left:1195.00px;top:873.18px;font-size:13.6px;line-height:13.6px;color:#5b5b5b;transform:scaleX(0.9490);transform-origin:0 0;">Zebra MC659B (17.65%)</div>
<div class="t" style="left:1561.30px;top:729.18px;font-size:13.6px;line-height:13.6px;color:#5b5b5b;transform:scaleX(0.9750);transform-origin:0 0;">Other (29.41%)</div>
<div class="t" style="left:1559.00px;top:842.38px;font-size:13.6px;line-height:13.6px;color:#5b5b5b;transform:scaleX(0.9409);transform-origin:0 0;">Zebra TC56 (13.73%)</div>
<svg style="position:absolute;left:0;top:0" width="2185" height="1213"><polyline points="1340.00,706.50 1396.80,718.70 1399.00,721.50" fill="none" stroke="#d90f4b" stroke-width="1"/></svg>
<svg style="position:absolute;left:0;top:0" width="2185" height="1213"><polyline points="1313.90,748.20 1337.90,754.00" fill="none" stroke="#90ee80" stroke-width="1"/></svg>
<svg style="position:absolute;left:0;top:0" width="2185" height="1213"><polyline points="1309.30,828.80 1328.80,825.20" fill="none" stroke="#268582" stroke-width="1"/></svg>
<svg style="position:absolute;left:0;top:0" width="2185" height="1213"><polyline points="1344.70,883.20 1417.00,870.50" fill="none" stroke="#f7a35c" stroke-width="1"/></svg>
<svg style="position:absolute;left:0;top:0" width="2185" height="1213"><polyline points="1545.40,738.70 1516.90,747.30" fill="none" stroke="#8a0038" stroke-width="1"/></svg>
<svg style="position:absolute;left:0;top:0" width="2185" height="1213"><polyline points="1543.00,852.40 1521.40,845.60" fill="none" stroke="#4b3fd2" stroke-width="1"/></svg>
<div style="position:absolute;left:1174.90px;top:940.40px;width:10.6px;height:10.6px;border-radius:50%;background:#d90f4b;"></div>
<div class="t" style="left:1191.96px;top:939.50px;font-size:12.4px;line-height:12.4px;color:#3a3d46;transform:scaleX(0.9421);transform-origin:0 0;">Honeywell CN70</div>
<div style="position:absolute;left:1291.80px;top:940.40px;width:10.6px;height:10.6px;border-radius:50%;background:#90ee80;"></div>
<div class="t" style="left:1309.30px;top:939.50px;font-size:12.4px;line-height:12.4px;color:#3a3d46;transform:scaleX(0.8499);transform-origin:0 0;">TC75x</div>
<div style="position:absolute;left:1354.30px;top:940.40px;width:10.6px;height:10.6px;border-radius:50%;background:#268582;"></div>
<div class="t" style="left:1372.80px;top:939.50px;font-size:12.4px;line-height:12.4px;color:#3a3d46;transform:scaleX(0.8801);transform-origin:0 0;">Zebra MC45</div>
<div style="position:absolute;left:1446.70px;top:940.40px;width:10.6px;height:10.6px;border-radius:50%;background:#f7a35c;"></div>
<div class="t" style="left:1465.20px;top:939.50px;font-size:12.4px;line-height:12.4px;color:#3a3d46;transform:scaleX(0.8871);transform-origin:0 0;">Zebra MC659B</div>
<div style="position:absolute;left:1553.20px;top:940.40px;width:10.6px;height:10.6px;border-radius:50%;background:#4b3fd2;"></div>
<div class="t" style="left:1571.20px;top:939.50px;font-size:12.4px;line-height:12.4px;color:#3a3d46;transform:scaleX(0.8759);transform-origin:0 0;">Zebra TC56</div>
<div style="position:absolute;left:1643.00px;top:940.40px;width:10.6px;height:10.6px;border-radius:50%;background:#8a0038;"></div>
<div class="t" style="left:1660.50px;top:939.50px;font-size:12.4px;line-height:12.4px;color:#3a3d46;transform:scaleX(0.9688);transform-origin:0 0;">Other</div>
<svg style="position:absolute;left:0;top:0" width="2185" height="1213"><line x1="351.20" y1="818.50" x2="965.30" y2="851.60" stroke="#e7e8eb" stroke-width="1"/><line x1="351.20" y1="818.50" x2="334.10" y2="824.70" stroke="#e7e8eb" stroke-width="1"/><line x1="351.15" y1="782.93" x2="965.30" y2="814.48" stroke="#e7e8eb" stroke-width="1"/><line x1="351.15" y1="782.93" x2="333.88" y2="788.88" stroke="#e7e8eb" stroke-width="1"/><line x1="351.10" y1="747.36" x2="965.30" y2="777.36" stroke="#e7e8eb" stroke-width="1"/><line x1="351.10" y1="747.36" x2="333.65" y2="753.06" stroke="#e7e8eb" stroke-width="1"/><line x1="351.05" y1="711.78" x2="965.30" y2="740.23" stroke="#e7e8eb" stroke-width="1"/><line x1="351.05" y1="711.78" x2="333.43" y2="717.23" stroke="#e7e8eb" stroke-width="1"/><line x1="351.00" y1="676.20" x2="965.30" y2="703.10" stroke="#e7e8eb" stroke-width="1"/><line x1="351.00" y1="676.20" x2="333.20" y2="681.40" stroke="#e7e8eb" stroke-width="1"/><line x1="351.20" y1="818.50" x2="351.00" y2="676.20" stroke="#e7e8eb" stroke-width="1"/><line x1="351.20" y1="818.50" x2="334.70" y2="824.70" stroke="#e7e8eb" stroke-width="1"/><line x1="375.76" y1="819.82" x2="375.57" y2="677.28" stroke="#e7e8eb" stroke-width="1"/><line x1="375.76" y1="819.82" x2="359.26" y2="826.02" stroke="#e7e8eb" stroke-width="1"/><line x1="400.41" y1="821.15" x2="400.22" y2="678.36" stroke="#e7e8eb" stroke-width="1"/><line x1="400.41" y1="821.15" x2="383.91" y2="827.35" stroke="#e7e8eb" stroke-width="1"/><line x1="425.14" y1="822.49" x2="424.96" y2="679.44" stroke="#e7e8eb" stroke-width="1"/><line x1="425.14" y1="822.49" x2="408.64" y2="828.69" stroke="#e7e8eb" stroke-width="1"/><line x1="449.96" y1="823.82" x2="449.79" y2="680.53" stroke="#e7e8eb" stroke-width="1"/><line x1="449.96" y1="823.82" x2="433.46" y2="830.02" stroke="#e7e8eb" stroke-width="1"/><line x1="474.87" y1="825.17" x2="474.70" y2="681.62" stroke="#e7e8eb" stroke-width="1"/><line x1="474.87" y1="825.17" x2="458.37" y2="831.37" stroke="#e7e8eb" stroke-width="1"/><line x1="499.86" y1="826.51" x2="499.71" y2="682.71" stroke="#e7e8eb" stroke-width="1"/><line x1="499.86" y1="826.51" x2="483.36" y2="832.71" stroke="#e7e8eb" stroke-width="1"/><line x1="524.94" y1="827.86" x2="524.80" y2="683.81" stroke="#e7e8eb" stroke-width="1"/><line x1="524.94" y1="827.86" x2="508.44" y2="834.06" stroke="#e7e8eb" stroke-width="1"/><line x1="550.11" y1="829.22" x2="549.98" y2="684.91" stroke="#e7e8eb" stroke-width="1"/><line x1="550.11" y1="829.22" x2="533.61" y2="835.42" stroke="#e7e8eb" stroke-width="1"/><line x1="575.37" y1="830.58" x2="575.24" y2="686.02" stroke="#e7e8eb" stroke-width="1"/><line x1="575.37" y1="830.58" x2="558.87" y2="836.78" stroke="#e7e8eb" stroke-width="1"/><line x1="600.72" y1="831.95" x2="600.60" y2="687.13" stroke="#e7e8eb" stroke-width="1"/><line x1="600.72" y1="831.95" x2="584.22" y2="838.15" stroke="#e7e8eb" stroke-width="1"/><line x1="626.16" y1="833.32" x2="626.05" y2="688.24" stroke="#e7e8eb" stroke-width="1"/><line x1="626.16" y1="833.32" x2="609.66" y2="839.52" stroke="#e7e8eb" stroke-width="1"/><line x1="651.69" y1="834.70" x2="651.59" y2="689.36" stroke="#e7e8eb" stroke-width="1"/><line x1="651.69" y1="834.70" x2="635.19" y2="840.90" stroke="#e7e8eb" stroke-width="1"/><line x1="677.32" y1="836.08" x2="677.22" y2="690.49" stroke="#e7e8eb" stroke-width="1"/><line x1="677.32" y1="836.08" x2="660.82" y2="842.28" stroke="#e7e8eb" stroke-width="1"/><line x1="703.03" y1="837.46" x2="702.94" y2="691.61" stroke="#e7e8eb" stroke-width="1"/><line x1="703.03" y1="837.46" x2="686.53" y2="843.66" stroke="#e7e8eb" stroke-width="1"/><line x1="728.83" y1="838.85" x2="728.75" y2="692.74" stroke="#e7e8eb" stroke-width="1"/><line x1="728.83" y1="838.85" x2="712.33" y2="845.05" stroke="#e7e8eb" stroke-width="1"/><line x1="754.73" y1="840.25" x2="754.66" y2="693.88" stroke="#e7e8eb" stroke-width="1"/><line x1="754.73" y1="840.25" x2="738.23" y2="846.45" stroke="#e7e8eb" stroke-width="1"/><line x1="780.72" y1="841.65" x2="780.66" y2="695.01" stroke="#e7e8eb" stroke-width="1"/><line x1="780.72" y1="841.65" x2="764.22" y2="847.85" stroke="#e7e8eb" stroke-width="1"/><line x1="806.81" y1="843.06" x2="806.75" y2="696.16" stroke="#e7e8eb" stroke-width="1"/><line x1="806.81" y1="843.06" x2="790.31" y2="849.26" stroke="#e7e8eb" stroke-width="1"/><line x1="832.98" y1="844.47" x2="832.94" y2="697.30" stroke="#e7e8eb" stroke-width="1"/><line x1="832.98" y1="844.47" x2="816.48" y2="850.67" stroke="#e7e8eb" stroke-width="1"/><line x1="859.26" y1="845.88" x2="859.22" y2="698.45" stroke="#e7e8eb" stroke-width="1"/><line x1="859.26" y1="845.88" x2="842.76" y2="852.08" stroke="#e7e8eb" stroke-width="1"/><line x1="885.62" y1="847.31" x2="885.60" y2="699.61" stroke="#e7e8eb" stroke-width="1"/><line x1="885.62" y1="847.31" x2="869.12" y2="853.51" stroke="#e7e8eb" stroke-width="1"/><line x1="912.09" y1="848.73" x2="912.07" y2="700.77" stroke="#e7e8eb" stroke-width="1"/><line x1="912.09" y1="848.73" x2="895.59" y2="854.93" stroke="#e7e8eb" stroke-width="1"/><line x1="938.64" y1="850.16" x2="938.64" y2="701.93" stroke="#e7e8eb" stroke-width="1"/><line x1="938.64" y1="850.16" x2="922.14" y2="856.36" stroke="#e7e8eb" stroke-width="1"/><line x1="965.30" y1="851.60" x2="965.30" y2="703.10" stroke="#e7e8eb" stroke-width="1"/><line x1="965.30" y1="851.60" x2="948.80" y2="857.80" stroke="#e7e8eb" stroke-width="1"/></svg>
<svg style="position:absolute;left:0;top:0" width="2185" height="1213"><polygon points="513.70,787.60 528.00,788.32 528.00,836.42 513.70,835.70" fill="#80b36f" stroke="#80b36f" stroke-width="0.4" stroke-linejoin="round"/><polygon points="528.00,788.32 534.00,785.52 534.00,833.62 528.00,836.42" fill="#6a9c5b" stroke="#6a9c5b" stroke-width="0.4" stroke-linejoin="round"/><polygon points="513.70,787.60 528.00,788.32 534.00,785.52 519.70,784.80" fill="#90c47e" stroke="#90c47e" stroke-width="0.4" stroke-linejoin="round"/><polygon points="538.89,835.94 553.19,836.66 553.19,837.86 538.89,837.14" fill="#fca622" stroke="#fca622" stroke-width="0.4" stroke-linejoin="round"/><polygon points="553.19,836.66 559.19,833.86 559.19,835.06 553.19,837.86" fill="#e58f12" stroke="#e58f12" stroke-width="0.4" stroke-linejoin="round"/><polygon points="538.89,748.50 553.19,749.22 553.19,836.66 538.89,835.94" fill="#80b36f" stroke="#80b36f" stroke-width="0.4" stroke-linejoin="round"/><polygon points="553.19,749.22 559.19,746.42 559.19,833.86 553.19,836.66" fill="#6a9c5b" stroke="#6a9c5b" stroke-width="0.4" stroke-linejoin="round"/><polygon points="538.89,748.50 553.19,749.22 559.19,746.42 544.89,745.70" fill="#90c47e" stroke="#90c47e" stroke-width="0.4" stroke-linejoin="round"/><polygon points="564.19,817.30 578.49,818.01 578.49,839.30 564.19,838.58" fill="#fca622" stroke="#fca622" stroke-width="0.4" stroke-linejoin="round"/><polygon points="578.49,818.01 584.49,815.22 584.49,836.50 578.49,839.30" fill="#e58f12" stroke="#e58f12" stroke-width="0.4" stroke-linejoin="round"/><polygon points="564.19,765.30 578.49,766.01 578.49,818.01 564.19,817.30" fill="#80b36f" stroke="#80b36f" stroke-width="0.4" stroke-linejoin="round"/><polygon points="578.49,766.01 584.49,763.22 584.49,815.22 578.49,818.01" fill="#6a9c5b" stroke="#6a9c5b" stroke-width="0.4" stroke-linejoin="round"/><polygon points="564.19,765.30 578.49,766.01 584.49,763.22 570.19,762.50" fill="#90c47e" stroke="#90c47e" stroke-width="0.4" stroke-linejoin="round"/><polygon points="589.60,834.20 603.90,834.92 603.90,840.74 589.60,840.03" fill="#fca622" stroke="#fca622" stroke-width="0.4" stroke-linejoin="round"/><polygon points="603.90,834.92 609.90,832.12 609.90,837.94 603.90,840.74" fill="#e58f12" stroke="#e58f12" stroke-width="0.4" stroke-linejoin="round"/><polygon points="589.60,814.00 603.90,814.72 603.90,834.92 589.60,834.20" fill="#80b36f" stroke="#80b36f" stroke-width="0.4" stroke-linejoin="round"/><polygon points="603.90,814.72 609.90,811.92 609.90,832.12 603.90,834.92" fill="#6a9c5b" stroke="#6a9c5b" stroke-width="0.4" stroke-linejoin="round"/><polygon points="589.60,814.00 603.90,814.72 609.90,811.92 595.60,811.20" fill="#90c47e" stroke="#90c47e" stroke-width="0.4" stroke-linejoin="round"/><polygon points="615.13,813.00 629.43,813.72 629.43,842.18 615.13,841.47" fill="#80b36f" stroke="#80b36f" stroke-width="0.4" stroke-linejoin="round"/><polygon points="629.43,813.72 635.43,810.92 635.43,839.38 629.43,842.18" fill="#6a9c5b" stroke="#6a9c5b" stroke-width="0.4" stroke-linejoin="round"/><polygon points="615.13,813.00 629.43,813.72 635.43,810.92 621.13,810.20" fill="#90c47e" stroke="#90c47e" stroke-width="0.4" stroke-linejoin="round"/><polygon points="640.77,798.50 655.07,799.22 655.07,843.63 640.77,842.91" fill="#fca622" stroke="#fca622" stroke-width="0.4" stroke-linejoin="round"/><polygon points="655.07,799.22 661.07,796.42 661.07,840.83 655.07,843.63" fill="#e58f12" stroke="#e58f12" stroke-width="0.4" stroke-linejoin="round"/><polygon points="640.77,723.70 655.07,724.42 655.07,799.22 640.77,798.50" fill="#80b36f" stroke="#80b36f" stroke-width="0.4" stroke-linejoin="round"/><polygon points="655.07,724.42 661.07,721.62 661.07,796.42 655.07,799.22" fill="#6a9c5b" stroke="#6a9c5b" stroke-width="0.4" stroke-linejoin="round"/><polygon points="640.77,723.70 655.07,724.42 661.07,721.62 646.77,720.90" fill="#90c47e" stroke="#90c47e" stroke-width="0.4" stroke-linejoin="round"/><polygon points="666.52,796.60 680.82,797.32 680.82,845.07 666.52,844.35" fill="#fca622" stroke="#fca622" stroke-width="0.4" stroke-linejoin="round"/><polygon points="680.82,797.32 686.82,794.52 686.82,842.27 680.82,845.07" fill="#e58f12" stroke="#e58f12" stroke-width="0.4" stroke-linejoin="round"/><polygon points="666.52,731.20 680.82,731.92 680.82,797.32 666.52,796.60" fill="#80b36f" stroke="#80b36f" stroke-width="0.4" stroke-linejoin="round"/><polygon points="680.82,731.92 686.82,729.12 686.82,794.52 680.82,797.32" fill="#6a9c5b" stroke="#6a9c5b" stroke-width="0.4" stroke-linejoin="round"/><polygon points="666.52,731.20 680.82,731.92 686.82,729.12 672.52,728.40" fill="#90c47e" stroke="#90c47e" stroke-width="0.4" stroke-linejoin="round"/><polygon points="692.39,835.50 706.69,836.22 706.69,846.51 692.39,845.79" fill="#fca622" stroke="#fca622" stroke-width="0.4" stroke-linejoin="round"/><polygon points="706.69,836.22 712.69,833.42 712.69,843.71 706.69,846.51" fill="#e58f12" stroke="#e58f12" stroke-width="0.4" stroke-linejoin="round"/><polygon points="692.39,820.30 706.69,821.01 706.69,836.22 692.39,835.50" fill="#80b36f" stroke="#80b36f" stroke-width="0.4" stroke-linejoin="round"/><polygon points="706.69,821.01 712.69,818.22 712.69,833.42 706.69,836.22" fill="#6a9c5b" stroke="#6a9c5b" stroke-width="0.4" stroke-linejoin="round"/><polygon points="692.39,820.30 706.69,821.01 712.69,818.22 698.39,817.50" fill="#90c47e" stroke="#90c47e" stroke-width="0.4" stroke-linejoin="round"/><polygon points="718.38,824.30 732.67,825.01 732.67,847.95 718.38,847.24" fill="#fca622" stroke="#fca622" stroke-width="0.4" stroke-linejoin="round"/><polygon points="732.67,825.01 738.67,822.22 738.67,845.15 732.67,847.95" fill="#e58f12" stroke="#e58f12" stroke-width="0.4" stroke-linejoin="round"/><polygon points="718.38,806.00 732.67,806.72 732.67,825.01 718.38,824.30" fill="#80b36f" stroke="#80b36f" stroke-width="0.4" stroke-linejoin="round"/><polygon points="732.67,806.72 738.67,803.92 738.67,822.22 732.67,825.01" fill="#6a9c5b" stroke="#6a9c5b" stroke-width="0.4" stroke-linejoin="round"/><polygon points="718.38,806.00 732.67,806.72 738.67,803.92 724.38,803.20" fill="#90c47e" stroke="#90c47e" stroke-width="0.4" stroke-linejoin="round"/><polygon points="744.47,814.40 758.77,815.12 758.77,849.39 744.47,848.68" fill="#fca622" stroke="#fca622" stroke-width="0.4" stroke-linejoin="round"/><polygon points="758.77,815.12 764.77,812.32 764.77,846.59 758.77,849.39" fill="#e58f12" stroke="#e58f12" stroke-width="0.4" stroke-linejoin="round"/><polygon points="744.47,814.40 758.77,815.12 764.77,812.32 750.47,811.60" fill="#ffbd48" stroke="#ffbd48" stroke-width="0.4" stroke-linejoin="round"/><polygon points="770.68,808.80 784.98,809.51 784.98,850.84 770.68,850.12" fill="#fca622" stroke="#fca622" stroke-width="0.4" stroke-linejoin="round"/><polygon points="784.98,809.51 790.98,806.72 790.98,848.04 784.98,850.84" fill="#e58f12" stroke="#e58f12" stroke-width="0.4" stroke-linejoin="round"/><polygon points="770.68,808.80 784.98,809.51 790.98,806.72 776.68,806.00" fill="#ffbd48" stroke="#ffbd48" stroke-width="0.4" stroke-linejoin="round"/><polygon points="797.01,799.50 811.31,800.22 811.31,852.28 797.01,851.56" fill="#fca622" stroke="#fca622" stroke-width="0.4" stroke-linejoin="round"/><polygon points="811.31,800.22 817.31,797.42 817.31,849.48 811.31,852.28" fill="#e58f12" stroke="#e58f12" stroke-width="0.4" stroke-linejoin="round"/><polygon points="797.01,761.30 811.31,762.01 811.31,800.22 797.01,799.50" fill="#80b36f" stroke="#80b36f" stroke-width="0.4" stroke-linejoin="round"/><polygon points="811.31,762.01 817.31,759.22 817.31,797.42 811.31,800.22" fill="#6a9c5b" stroke="#6a9c5b" stroke-width="0.4" stroke-linejoin="round"/><polygon points="797.01,761.30 811.31,762.01 817.31,759.22 803.01,758.50" fill="#90c47e" stroke="#90c47e" stroke-width="0.4" stroke-linejoin="round"/><polygon points="823.45,815.40 837.75,816.12 837.75,853.72 823.45,853.00" fill="#fca622" stroke="#fca622" stroke-width="0.4" stroke-linejoin="round"/><polygon points="837.75,816.12 843.75,813.32 843.75,850.92 837.75,853.72" fill="#e58f12" stroke="#e58f12" stroke-width="0.4" stroke-linejoin="round"/><polygon points="823.45,815.40 837.75,816.12 843.75,813.32 829.45,812.60" fill="#ffbd48" stroke="#ffbd48" stroke-width="0.4" stroke-linejoin="round"/></svg>
<div class="t" style="left:303.00px;top:676.08px;font-size:11.6px;line-height:11.6px;color:#333;transform:scaleX(0.8997);transform-origin:0 0;">200</div>
<div class="t" style="left:303.00px;top:711.68px;font-size:11.6px;line-height:11.6px;color:#333;transform:scaleX(0.8997);transform-origin:0 0;">150</div>
<div class="t" style="left:303.00px;top:746.28px;font-size:11.6px;line-height:11.6px;color:#333;transform:scaleX(0.8997);transform-origin:0 0;">100</div>
<div class="t" style="left:308.80px;top:783.28px;font-size:11.6px;line-height:11.6px;color:#333;transform:scaleX(0.8998);transform-origin:0 0;">50</div>
<div class="t" style="left:314.50px;top:818.58px;font-size:11.6px;line-height:11.6px;color:#333;transform:scaleX(0.9167);transform-origin:0 0;">0</div>
<div class="t" style="left:341.90px;top:830.57px;font-size:12.2px;line-height:12.2px;color:#333;transform:scaleX(0.8000);transform-origin:0 0;">0</div>
<div class="t" style="left:366.35px;top:832.03px;font-size:12.2px;line-height:12.2px;color:#333;transform:scaleX(0.8000);transform-origin:0 0;">1</div>
<div class="t" style="left:390.92px;top:833.48px;font-size:12.2px;line-height:12.2px;color:#333;transform:scaleX(0.8000);transform-origin:0 0;">2</div>
<div class="t" style="left:415.59px;top:834.94px;font-size:12.2px;line-height:12.2px;color:#333;transform:scaleX(0.8000);transform-origin:0 0;">3</div>
<div class="t" style="left:440.38px;top:836.39px;font-size:12.2px;line-height:12.2px;color:#333;transform:scaleX(0.8000);transform-origin:0 0;">4</div>
<div class="t" style="left:465.27px;top:837.85px;font-size:12.2px;line-height:12.2px;color:#333;transform:scaleX(0.8000);transform-origin:0 0;">5</div>
<div class="t" style="left:490.28px;top:839.30px;font-size:12.2px;line-height:12.2px;color:#333;transform:scaleX(0.8000);transform-origin:0 0;">6</div>
<div class="t" style="left:515.40px;top:840.76px;font-size:12.2px;line-height:12.2px;color:#333;transform:scaleX(0.8000);transform-origin:0 0;">7</div>
<div class="t" style="left:540.62px;top:842.21px;font-size:12.2px;line-height:12.2px;color:#333;transform:scaleX(0.8000);transform-origin:0 0;">8</div>
<div class="t" style="left:565.96px;top:843.67px;font-size:12.2px;line-height:12.2px;color:#333;transform:scaleX(0.8000);transform-origin:0 0;">9</div>
<div class="t" style="left:588.30px;top:845.12px;font-size:12.2px;line-height:12.2px;color:#333;transform:scaleX(0.8564);transform-origin:0 0;">10</div>
<div class="t" style="left:613.85px;top:846.58px;font-size:12.2px;line-height:12.2px;color:#333;transform:scaleX(0.9167);transform-origin:0 0;">11</div>
<div class="t" style="left:639.52px;top:848.03px;font-size:12.2px;line-height:12.2px;color:#333;transform:scaleX(0.8564);transform-origin:0 0;">12</div>
<div class="t" style="left:665.29px;top:849.49px;font-size:12.2px;line-height:12.2px;color:#333;transform:scaleX(0.8564);transform-origin:0 0;">13</div>
<div class="t" style="left:691.18px;top:850.94px;font-size:12.2px;line-height:12.2px;color:#333;transform:scaleX(0.8564);transform-origin:0 0;">14</div>
<div class="t" style="left:717.18px;top:852.40px;font-size:12.2px;line-height:12.2px;color:#333;transform:scaleX(0.8564);transform-origin:0 0;">15</div>
<div class="t" style="left:743.28px;top:853.85px;font-size:12.2px;line-height:12.2px;color:#333;transform:scaleX(0.8564);transform-origin:0 0;">16</div>
<div class="t" style="left:769.50px;top:855.31px;font-size:12.2px;line-height:12.2px;color:#333;transform:scaleX(0.8564);transform-origin:0 0;">17</div>
<div class="t" style="left:795.82px;top:856.76px;font-size:12.2px;line-height:12.2px;color:#333;transform:scaleX(0.8564);transform-origin:0 0;">18</div>
<div class="t" style="left:822.25px;top:858.22px;font-size:12.2px;line-height:12.2px;color:#333;transform:scaleX(0.8564);transform-origin:0 0;">19</div>
<div class="t" style="left:848.80px;top:859.67px;font-size:12.2px;line-height:12.2px;color:#333;transform:scaleX(0.8564);transform-origin:0 0;">20</div>
<div class="t" style="left:875.45px;top:861.13px;font-size:12.2px;line-height:12.2px;color:#333;transform:scaleX(0.8564);transform-origin:0 0;">21</div>
<div class="t" style="left:902.22px;top:862.58px;font-size:12.2px;line-height:12.2px;color:#333;transform:scaleX(0.8564);transform-origin:0 0;">22</div>
<div class="t" style="left:929.09px;top:864.04px;font-size:12.2px;line-height:12.2px;color:#333;transform:scaleX(0.8564);transform-origin:0 0;">23</div>
<div class="t" style="left:231.22px;top:746.80px;width:99.17px;font-size:12.4px;line-height:12.4px;color:#707070;transform:rotate(-90deg) scaleX(0.9288);transform-origin:50% 50%;">Number of Events</div>
<div class="t" style="left:618.04px;top:875.30px;font-size:12.4px;line-height:12.4px;color:#666;transform:scaleX(1.0066);transform-origin:0 0;">Hour</div>
<div style="position:absolute;left:541.00px;top:940.40px;width:10.6px;height:10.6px;border-radius:50%;background:#80b36f;"></div>
<div class="t" style="left:559.01px;top:939.50px;font-size:12.4px;line-height:12.4px;color:#3a3d46;transform:scaleX(0.9855);transform-origin:0 0;">Login</div>
<div style="position:absolute;left:613.10px;top:940.40px;width:10.6px;height:10.6px;border-radius:50%;background:#fca622;"></div>
<div class="t" style="left:631.03px;top:939.50px;font-size:12.4px;line-height:12.4px;color:#3a3d46;transform:scaleX(0.9665);transform-origin:0 0;">Logout</div>
<svg style="position:absolute;left:0;top:0" width="2185" height="1213"><line x1="306.30" y1="1082.50" x2="306.30" y2="1213.00" stroke="#e7e8eb" stroke-width="1"/><line x1="370.30" y1="1085.00" x2="370.30" y2="1213.00" stroke="#e7e8eb" stroke-width="1"/><line x1="432.80" y1="1087.44" x2="432.80" y2="1213.00" stroke="#e7e8eb" stroke-width="1"/><line x1="497.20" y1="1089.96" x2="497.20" y2="1213.00" stroke="#e7e8eb" stroke-width="1"/><line x1="561.20" y1="1092.46" x2="561.20" y2="1213.00" stroke="#e7e8eb" stroke-width="1"/><line x1="627.00" y1="1095.04" x2="627.00" y2="1213.00" stroke="#e7e8eb" stroke-width="1"/><line x1="692.60" y1="1097.60" x2="692.60" y2="1213.00" stroke="#e7e8eb" stroke-width="1"/><line x1="306.30" y1="1082.50" x2="692.60" y2="1097.60" stroke="#e7e8eb" stroke-width="1"/><line x1="306.30" y1="1082.50" x2="288.80" y2="1085.50" stroke="#e7e8eb" stroke-width="1"/><line x1="306.30" y1="1128.40" x2="692.60" y2="1146.50" stroke="#e7e8eb" stroke-width="1"/><line x1="306.30" y1="1128.40" x2="288.80" y2="1133.01" stroke="#e7e8eb" stroke-width="1"/><line x1="306.30" y1="1174.60" x2="692.60" y2="1192.70" stroke="#e7e8eb" stroke-width="1"/><line x1="306.30" y1="1174.60" x2="288.80" y2="1180.82" stroke="#e7e8eb" stroke-width="1"/></svg>
<svg style="position:absolute;left:0;top:0" width="2185" height="1213"><defs><linearGradient id="cgef5b80" x1="0" y1="0" x2="0" y2="1"><stop offset="0" stop-color="#ef5b80"/><stop offset="0.55" stop-color="#ef5b80"/><stop offset="1" stop-color="#e0506f"/></linearGradient></defs><path d="M290.00 1097.60 L553.00 1108.20 L553.00 1132.30 L290.00 1120.20 A3.5 11.30 0 0 1 290.00 1097.60 Z" fill="url(#cgef5b80)"/><ellipse cx="553.00" cy="1120.25" rx="4" ry="12.05" fill="#f27396"/><defs><linearGradient id="cge8d95b" x1="0" y1="0" x2="0" y2="1"><stop offset="0" stop-color="#e8d95b"/><stop offset="0.55" stop-color="#e8d95b"/><stop offset="1" stop-color="#d9c84a"/></linearGradient></defs><path d="M290.00 1143.80 L407.00 1148.90 L407.00 1171.60 L290.00 1165.50 A3.5 10.85 0 0 1 290.00 1143.80 Z" fill="url(#cge8d95b)"/><ellipse cx="407.00" cy="1160.25" rx="4" ry="11.35" fill="#eedf6a"/><defs><linearGradient id="cg2e9a97" x1="0" y1="0" x2="0" y2="1"><stop offset="0" stop-color="#2e9a97"/><stop offset="0.55" stop-color="#2e9a97"/><stop offset="1" stop-color="#268a87"/></linearGradient></defs><path d="M290.00 1190.00 L369.00 1193.50 L369.00 1216.50 L290.00 1213.00 A3.5 11.50 0 0 1 290.00 1190.00 Z" fill="url(#cg2e9a97)"/><ellipse cx="369.00" cy="1205.00" rx="4" ry="11.50" fill="#35a8a4"/></svg>
<div class="t" style="left:205.70px;top:1104.64px;font-size:12px;line-height:12px;color:#333;transform:scaleX(0.8929);transform-origin:0 0;">Out of contact</div>
<div class="t" style="left:216.90px;top:1150.84px;font-size:12px;line-height:12px;color:#333;transform:scaleX(0.8964);transform-origin:0 0;">Low Battery</div>
<div class="t" style="left:229.30px;top:1197.34px;font-size:12px;line-height:12px;color:#333;transform:scaleX(0.8479);transform-origin:0 0;">Geofence</div>
<svg style="position:absolute;left:0;top:0" width="2185" height="1213"><line x1="927.10" y1="1081.40" x2="927.10" y2="1213.00" stroke="#e7e8eb" stroke-width="1"/><line x1="1028.20" y1="1085.75" x2="1028.20" y2="1213.00" stroke="#e7e8eb" stroke-width="1"/><line x1="1131.40" y1="1090.18" x2="1131.40" y2="1213.00" stroke="#e7e8eb" stroke-width="1"/><line x1="1235.60" y1="1094.66" x2="1235.60" y2="1213.00" stroke="#e7e8eb" stroke-width="1"/><line x1="1341.20" y1="1099.20" x2="1341.20" y2="1213.00" stroke="#e7e8eb" stroke-width="1"/><line x1="927.10" y1="1081.40" x2="1341.20" y2="1099.20" stroke="#e7e8eb" stroke-width="1"/><line x1="927.10" y1="1081.40" x2="910.00" y2="1085.60" stroke="#e7e8eb" stroke-width="1"/><line x1="927.10" y1="1143.30" x2="1341.20" y2="1162.30" stroke="#e7e8eb" stroke-width="1"/><line x1="927.10" y1="1143.30" x2="910.00" y2="1147.50" stroke="#e7e8eb" stroke-width="1"/><line x1="927.10" y1="1204.90" x2="1341.20" y2="1225.00" stroke="#e7e8eb" stroke-width="1"/><line x1="927.10" y1="1204.90" x2="910.00" y2="1209.10" stroke="#e7e8eb" stroke-width="1"/></svg>
<svg style="position:absolute;left:0;top:0" width="2185" height="1213"><polygon points="942.00,1130.50 975.30,1131.93 975.30,1300.00 942.00,1300.00" fill="#e6d85a" stroke="#e6d85a" stroke-width="0.4" stroke-linejoin="round"/><polygon points="975.30,1131.93 983.60,1129.13 983.60,1300.00 975.30,1300.00" fill="#cdbd3e" stroke="#cdbd3e" stroke-width="0.4" stroke-linejoin="round"/><polygon points="942.00,1130.50 975.30,1131.93 983.60,1129.13 950.30,1127.70" fill="#eadf70" stroke="#eadf70" stroke-width="0.4" stroke-linejoin="round"/><polygon points="1044.30,1206.30 1077.90,1207.74 1077.90,1300.00 1044.30,1300.00" fill="#2c9390" stroke="#2c9390" stroke-width="0.4" stroke-linejoin="round"/><polygon points="1077.90,1207.74 1086.80,1204.94 1086.80,1300.00 1077.90,1300.00" fill="#1f7c79" stroke="#1f7c79" stroke-width="0.4" stroke-linejoin="round"/><polygon points="1044.30,1206.30 1077.90,1207.74 1086.80,1204.94 1053.20,1203.50" fill="#38a3a0" stroke="#38a3a0" stroke-width="0.4" stroke-linejoin="round"/></svg>
<div class="t" style="left:888.30px;top:1081.18px;font-size:11.6px;line-height:11.6px;color:#333;transform:scaleX(0.9333);transform-origin:0 0;">3</div>
<div class="t" style="left:888.30px;top:1142.68px;font-size:11.6px;line-height:11.6px;color:#333;transform:scaleX(0.9333);transform-origin:0 0;">2</div>
<div class="t" style="left:888.30px;top:1203.08px;font-size:11.6px;line-height:11.6px;color:#333;transform:scaleX(0.9333);transform-origin:0 0;">1</div>
<div class="t" style="left:773.33px;top:1161.60px;width:172.15px;font-size:12.4px;line-height:12.4px;color:#707070;transform:rotate(-90deg) scaleX(0.9238);transform-origin:50% 50%;">Home Screen Duration (day(s))</div>
<svg style="position:absolute;left:0;top:0" width="2185" height="1213"><line x1="1591.40" y1="1081.50" x2="1591.40" y2="1213.00" stroke="#e7e8eb" stroke-width="1"/><line x1="1724.10" y1="1087.32" x2="1724.10" y2="1213.00" stroke="#e7e8eb" stroke-width="1"/><line x1="1858.40" y1="1093.22" x2="1858.40" y2="1213.00" stroke="#e7e8eb" stroke-width="1"/><line x1="1997.00" y1="1099.30" x2="1997.00" y2="1213.00" stroke="#e7e8eb" stroke-width="1"/><line x1="1591.40" y1="1081.30" x2="1997.00" y2="1099.30" stroke="#e7e8eb" stroke-width="1"/><line x1="1591.40" y1="1081.30" x2="1573.00" y2="1087.30" stroke="#e7e8eb" stroke-width="1"/><line x1="1591.40" y1="1127.80" x2="1997.00" y2="1146.60" stroke="#e7e8eb" stroke-width="1"/><line x1="1591.40" y1="1127.80" x2="1573.00" y2="1133.80" stroke="#e7e8eb" stroke-width="1"/><line x1="1591.40" y1="1174.20" x2="1997.00" y2="1193.80" stroke="#e7e8eb" stroke-width="1"/><line x1="1591.40" y1="1174.20" x2="1573.00" y2="1180.20" stroke="#e7e8eb" stroke-width="1"/><line x1="1591.40" y1="1220.60" x2="1997.00" y2="1241.00" stroke="#e7e8eb" stroke-width="1"/><line x1="1591.40" y1="1220.60" x2="1573.00" y2="1226.60" stroke="#e7e8eb" stroke-width="1"/></svg>
<svg style="position:absolute;left:0;top:0" width="2185" height="1213"><polygon points="1622.20,1095.70 1656.90,1097.19 1656.90,1300.00 1622.20,1300.00" fill="#518ed8" stroke="#518ed8" stroke-width="0.4" stroke-linejoin="round"/><polygon points="1656.90,1097.19 1663.70,1094.59 1663.70,1300.00 1656.90,1300.00" fill="#3a72c2" stroke="#3a72c2" stroke-width="0.4" stroke-linejoin="round"/><polygon points="1622.20,1095.70 1656.90,1097.19 1663.70,1094.59 1629.00,1093.10" fill="#5e9ae2" stroke="#5e9ae2" stroke-width="0.4" stroke-linejoin="round"/><polygon points="1756.60,1203.70 1791.30,1205.19 1791.30,1300.00 1756.60,1300.00" fill="#d06a1c" stroke="#d06a1c" stroke-width="0.4" stroke-linejoin="round"/><polygon points="1791.30,1205.19 1798.90,1202.59 1798.90,1300.00 1791.30,1300.00" fill="#b55610" stroke="#b55610" stroke-width="0.4" stroke-linejoin="round"/><polygon points="1756.60,1203.70 1791.30,1205.19 1798.90,1202.59 1764.20,1201.10" fill="#dc7a2c" stroke="#dc7a2c" stroke-width="0.4" stroke-linejoin="round"/></svg>
<div class="t" style="left:1541.40px;top:1081.55px;font-size:11.4px;line-height:11.4px;color:#333;transform:scaleX(0.8891);transform-origin:0 0;">400</div>
<div class="t" style="left:1541.40px;top:1128.45px;font-size:11.4px;line-height:11.4px;color:#333;transform:scaleX(0.8891);transform-origin:0 0;">300</div>
<div class="t" style="left:1541.40px;top:1174.25px;font-size:11.4px;line-height:11.4px;color:#333;transform:scaleX(0.8891);transform-origin:0 0;">200</div>
<div class="t" style="left:1423.83px;top:1223.30px;width:179.94px;font-size:12.4px;line-height:12.4px;color:#707070;transform:rotate(-90deg) scaleX(0.9176);transform-origin:50% 50%;">Total User Session Time (day(s))</div>
<div style="position:absolute;left:98px;top:1203px;width:1990px;height:10px;background:linear-gradient(to bottom,rgba(0,0,0,0),rgba(0,0,0,0.035));"></div>
</body></html>
